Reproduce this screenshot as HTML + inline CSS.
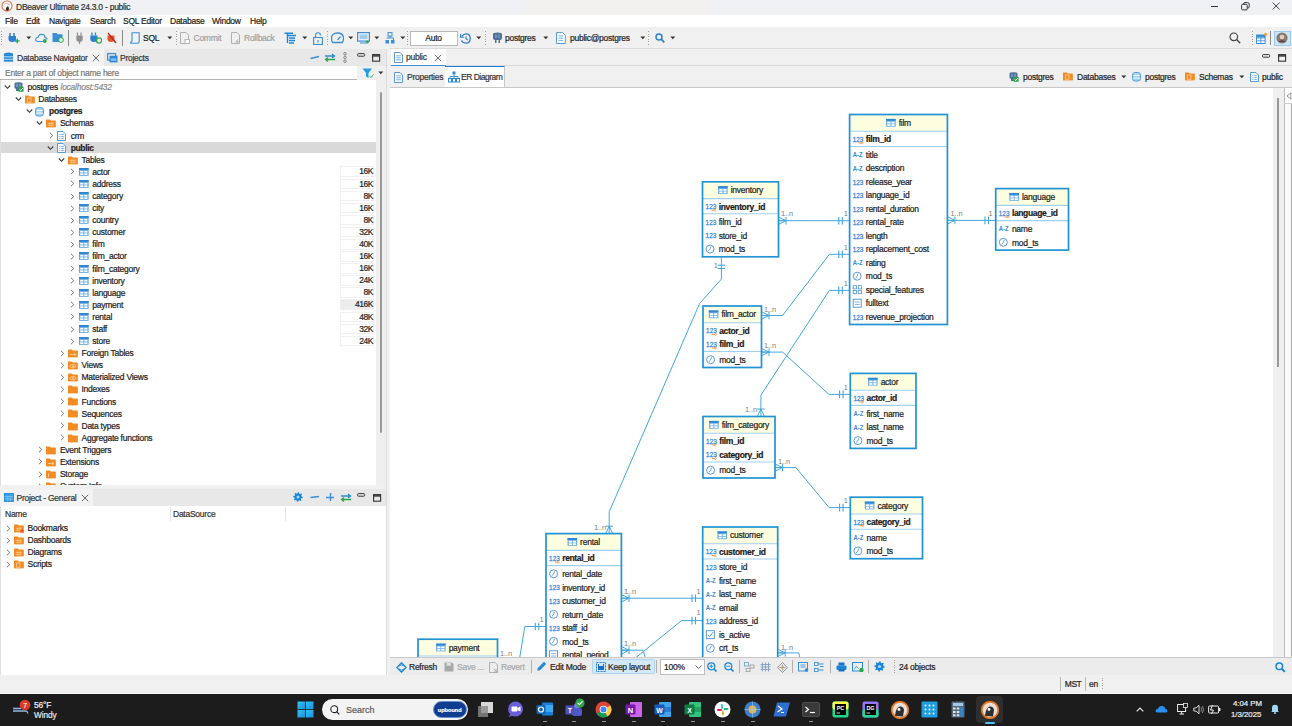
<!DOCTYPE html><html><head><meta charset="utf-8"><style>
html,body{margin:0;padding:0;}body{width:1292px;height:726px;overflow:hidden;position:relative;background:#f0f0f0;font-family:"Liberation Sans",sans-serif;}
.t{position:absolute;white-space:nowrap;font-family:"Liberation Sans",sans-serif;-webkit-text-stroke:0.2px currentColor;}
</style></head><body>
<div style="position:absolute;left:0px;top:0px;width:1292px;height:14.5px;background:#eff1f4;"></div>
<svg style="position:absolute;left:0.6px;top:0.4px;" width="12" height="12" viewBox="0 0 12 12"><circle cx="6" cy="6" r="5" fill="#fbfbfb" stroke="#e8703a" stroke-width="1.1"/><path d="M4.5 10.5 Q5 7 6.5 6.3 Q8.3 6.8 8 9 L7.3 10.8 Z" fill="#2b2b2b"/><path d="M3.5 4 Q6 3 8.5 4.5" fill="none" stroke="#999" stroke-width="0.6"/></svg>
<div class="t" style="left:16px;top:0.10px;line-height:14px;font-size:8.5px;color:#2e2e2e;letter-spacing:-0.25px;">DBeaver Ultimate 24.3.0 - public</div>
<div style="position:absolute;left:1211px;top:5.8px;width:7px;height:1px;background:#333;"></div>
<svg style="position:absolute;left:1240.5px;top:2px;" width="9" height="9" viewBox="0 0 9 9"><rect x="0.6" y="2.3" width="5.6" height="5.6" rx="1" fill="none" stroke="#333" stroke-width="1"/><path d="M2.4 2.2 Q2.6 0.6 4 0.6 H6.6 Q8.2 0.6 8.2 2.2 V4.8 Q8.2 6.2 6.4 6.2" fill="none" stroke="#333" stroke-width="1"/></svg>
<svg style="position:absolute;left:1271.5px;top:2.2px;" width="8.5" height="8" viewBox="0 0 8.5 8"><path d="M0.6 0.6 L7.6 7.4 M7.6 0.6 L0.6 7.4" stroke="#333" stroke-width="0.9"/></svg>
<div style="position:absolute;left:525px;top:0px;width:185px;height:14.5px;background:#f2f1f0;"></div>
<div style="position:absolute;left:0px;top:14.5px;width:1292px;height:12.5px;background:#ffffff;"></div>
<div class="t" style="left:5px;top:14.50px;line-height:13px;font-size:8.5px;color:#1a1a1a;letter-spacing:-0.25px;">File</div>
<div class="t" style="left:26px;top:14.50px;line-height:13px;font-size:8.5px;color:#1a1a1a;letter-spacing:-0.25px;">Edit</div>
<div class="t" style="left:49px;top:14.50px;line-height:13px;font-size:8.5px;color:#1a1a1a;letter-spacing:-0.25px;">Navigate</div>
<div class="t" style="left:90px;top:14.50px;line-height:13px;font-size:8.5px;color:#1a1a1a;letter-spacing:-0.25px;">Search</div>
<div class="t" style="left:123px;top:14.50px;line-height:13px;font-size:8.5px;color:#1a1a1a;letter-spacing:-0.25px;">SQL Editor</div>
<div class="t" style="left:170px;top:14.50px;line-height:13px;font-size:8.5px;color:#1a1a1a;letter-spacing:-0.25px;">Database</div>
<div class="t" style="left:212px;top:14.50px;line-height:13px;font-size:8.5px;color:#1a1a1a;letter-spacing:-0.25px;">Window</div>
<div class="t" style="left:250px;top:14.50px;line-height:13px;font-size:8.5px;color:#1a1a1a;letter-spacing:-0.25px;">Help</div>
<div style="position:absolute;left:0px;top:27px;width:1292px;height:21px;background:#f0f0f0;"></div>
<div style="position:absolute;left:1px;top:31px;width:1px;height:14px;background:repeating-linear-gradient(#a8a098 0 1px, transparent 1px 2.5px);"></div>
<svg style="position:absolute;left:8px;top:32px;" width="12" height="12" viewBox="0 0 12 12"><path d="M2 1 v3 M6 1 v3" stroke="#2f7fd0" stroke-width="1.5"/><path d="M0.5 4 H8 V7 Q8 10 4.2 10 Q0.5 10 0.5 7 Z" fill="#2f7fd0"/><path d="M7 9 h4.5 M9.2 6.8 v4.5" stroke="#2aa84a" stroke-width="1.4"/></svg>
<svg style="position:absolute;left:26px;top:36px;" width="6" height="4" viewBox="0 0 6 4"><path d="M0.3 0.5 H5.3 L2.8 3.3 Z" fill="#333"/></svg>
<svg style="position:absolute;left:35px;top:33px;" width="13" height="10" viewBox="0 0 13 10"><path d="M8 8.5 H3 Q0.6 8.5 0.7 6.3 Q0.9 4.2 3.1 4.3 Q3.8 1.2 6.8 1.3 Q9.8 1.5 10.1 4.6 Q12 4.9 12.2 6.5" fill="none" stroke="#3a8fd6" stroke-width="1.1"/><circle cx="9.8" cy="8" r="1.9" fill="#2aa84a"/></svg>
<svg style="position:absolute;left:52px;top:32px;" width="12" height="11" viewBox="0 0 12 11"><path d="M0.5 1 H4.5 L5.5 2.3 H10.5 V10 H0.5 Z" fill="#3a8fd6"/><circle cx="9" cy="8" r="2.4" fill="#e8f5e8" stroke="#2aa84a" stroke-width="1"/></svg>
<div style="position:absolute;left:67.5px;top:30px;width:1px;height:16px;background:#8a8a8a;"></div>
<svg style="position:absolute;left:76px;top:32px;" width="7" height="12" viewBox="0 0 7 12"><path d="M1.5 0.5 v3 M5 0.5 v3" stroke="#8f8f8f" stroke-width="1.2"/><path d="M0.3 3.5 H6.7 V7 Q6.7 10 3.5 10 Q0.3 10 0.3 7 Z" fill="#8f8f8f"/><path d="M3.5 10 v2" stroke="#8f8f8f" stroke-width="1.2"/></svg>
<svg style="position:absolute;left:90px;top:32px;" width="12" height="12" viewBox="0 0 12 12"><path d="M2 0.5 v3 M5.5 0.5 v3" stroke="#2f7fd0" stroke-width="1.3"/><path d="M0.3 3.5 H7.5 V7 Q7.5 10 3.9 10 Q0.3 10 0.3 7 Z" fill="#2f7fd0"/><circle cx="9" cy="8.5" r="2.6" fill="none" stroke="#2aa84a" stroke-width="1.2"/></svg>
<svg style="position:absolute;left:107px;top:32px;" width="10" height="12" viewBox="0 0 10 12"><path d="M0.5 3.5 H7.5 V7 Q7.5 10 4 10 Q0.5 10 0.5 7 Z" fill="#e0582a"/><path d="M1 1 L9 11" stroke="#c02020" stroke-width="1.3"/></svg>
<div style="position:absolute;left:121.5px;top:30px;width:1px;height:16px;background:#8a8a8a;"></div>
<svg style="position:absolute;left:130px;top:32px;" width="10" height="12" viewBox="0 0 10 12"><path d="M2 0.8 H9.2 V9.5 Q9.2 11.2 7.5 11.2 H0.8 V10 Q2 10 2 8.5 Z" fill="none" stroke="#3a8fd6" stroke-width="1.1"/></svg>
<div class="t" style="left:143px;top:31.00px;line-height:14px;font-size:8.5px;color:#222;letter-spacing:-0.25px;">SQL</div>
<svg style="position:absolute;left:167px;top:36px;" width="6" height="4" viewBox="0 0 6 4"><path d="M0.3 0.5 H5.3 L2.8 3.3 Z" fill="#333"/></svg>
<div style="position:absolute;left:176px;top:31px;width:1px;height:14px;background:repeating-linear-gradient(#a8a098 0 1px, transparent 1px 2.5px);"></div>
<svg style="position:absolute;left:180px;top:32px;" width="10" height="12" viewBox="0 0 10 12"><path d="M0.5 0.5 H6 L8.5 3 V11.5 H0.5 Z" fill="none" stroke="#b0b0b0" stroke-width="1"/><rect x="5" y="7.5" width="4.5" height="4" fill="#fff" stroke="#b0b0b0" stroke-width="0.9"/></svg>
<div class="t" style="left:193.5px;top:31.00px;line-height:14px;font-size:8.5px;color:#a0a0a0;letter-spacing:-0.25px;">Commit</div>
<svg style="position:absolute;left:231px;top:32px;" width="10" height="12" viewBox="0 0 10 12"><path d="M0.5 0.5 H6 L8.5 3 V11.5 H0.5 Z" fill="none" stroke="#b0b0b0" stroke-width="1"/><path d="M5 9.5 h4 M7 7.5 l-2 2 l2 2" fill="none" stroke="#b0b0b0" stroke-width="0.9"/></svg>
<div class="t" style="left:244px;top:31.00px;line-height:14px;font-size:8.5px;color:#a0a0a0;letter-spacing:-0.25px;">Rollback</div>
<svg style="position:absolute;left:284px;top:32px;" width="13" height="12" viewBox="0 0 13 12"><path d="M0.5 1.2 H9 M3.5 1.2 V11 M4 3.5 H12 M5 6 H11 M5 8.5 H11 M5 11 H10" stroke="#1a86d8" stroke-width="1.4"/></svg>
<svg style="position:absolute;left:302px;top:36px;" width="6" height="4" viewBox="0 0 6 4"><path d="M0.3 0.5 H5.3 L2.8 3.3 Z" fill="#333"/></svg>
<svg style="position:absolute;left:313px;top:31.5px;" width="10" height="13" viewBox="0 0 10 13"><path d="M2.5 5.5 V3.5 Q2.5 0.8 5 0.8 Q7.5 0.8 7.5 3.5" fill="none" stroke="#3a8fd6" stroke-width="1.1"/><rect x="0.6" y="5.5" width="8.8" height="7" fill="none" stroke="#3a8fd6" stroke-width="1.1"/><path d="M5 8 v2.5" stroke="#3a8fd6" stroke-width="1.1"/></svg>
<div style="position:absolute;left:327px;top:31px;width:1px;height:14px;background:repeating-linear-gradient(#a8a098 0 1px, transparent 1px 2.5px);"></div>
<svg style="position:absolute;left:331px;top:32px;" width="13" height="12" viewBox="0 0 13 12"><path d="M1.8 10.5 Q0.5 9 0.5 6.5 Q0.5 1 6.5 1 Q12.5 1 12.5 6.5 Q12.5 9 11.2 10.5 Z" fill="none" stroke="#3a8fd6" stroke-width="1.3"/><path d="M6.5 8 L9.5 4.5" stroke="#3a8fd6" stroke-width="1.2"/></svg>
<svg style="position:absolute;left:348px;top:36px;" width="6" height="4" viewBox="0 0 6 4"><path d="M0.3 0.5 H5.3 L2.8 3.3 Z" fill="#333"/></svg>
<svg style="position:absolute;left:357px;top:32px;" width="13" height="12" viewBox="0 0 13 12"><rect x="0.6" y="0.6" width="11.8" height="8.5" fill="none" stroke="#3a8fd6" stroke-width="1.2"/><rect x="2.5" y="2.5" width="8" height="4.5" fill="#9ccbee"/><path d="M3 11 H10" stroke="#3a8fd6" stroke-width="1"/><circle cx="10.5" cy="10" r="1.4" fill="#2aa84a"/></svg>
<svg style="position:absolute;left:374px;top:36px;" width="6" height="4" viewBox="0 0 6 4"><path d="M0.3 0.5 H5.3 L2.8 3.3 Z" fill="#333"/></svg>
<svg style="position:absolute;left:385px;top:32px;" width="10" height="12" viewBox="0 0 10 12"><rect x="3" y="0.6" width="4" height="3.5" fill="none" stroke="#3a8fd6" stroke-width="1"/><path d="M5 4 V6 M1.5 6 H8.5 V8" fill="none" stroke="#3a8fd6" stroke-width="1"/><rect x="0.5" y="8" width="3.5" height="3.5" fill="#3a8fd6"/><rect x="6" y="8" width="3.5" height="3.5" fill="#3a8fd6"/></svg>
<svg style="position:absolute;left:400px;top:36px;" width="6" height="4" viewBox="0 0 6 4"><path d="M0.3 0.5 H5.3 L2.8 3.3 Z" fill="#333"/></svg>
<div style="position:absolute;left:407px;top:31px;width:1px;height:14px;background:repeating-linear-gradient(#a8a098 0 1px, transparent 1px 2.5px);"></div>
<div style="position:absolute;left:409.5px;top:31px;width:48px;height:14.5px;background:#fff;border:1px solid #b9b9b9;box-sizing:border-box;"></div>
<div class="t" style="left:409.5px;top:31.00px;line-height:14px;font-size:8.5px;color:#222;letter-spacing:-0.25px;width:48px;text-align:center;">Auto</div>
<svg style="position:absolute;left:460px;top:32.5px;" width="11" height="11" viewBox="0 0 11 11"><path d="M2 3.2 Q3.8 0.8 6 0.8 Q10.2 0.8 10.2 5.5 Q10.2 10.2 6 10.2 Q2.8 10.2 1.5 7.5" fill="none" stroke="#2f7fd0" stroke-width="1.3"/><path d="M0.5 1 V4.2 H3.7" fill="none" stroke="#2f7fd0" stroke-width="1.2"/><path d="M6 3.3 V5.8 L7.8 7" fill="none" stroke="#2f7fd0" stroke-width="1.1"/></svg>
<svg style="position:absolute;left:476px;top:36px;" width="6" height="4" viewBox="0 0 6 4"><path d="M0.3 0.5 H5.3 L2.8 3.3 Z" fill="#333"/></svg>
<div style="position:absolute;left:485px;top:31px;width:1px;height:14px;background:repeating-linear-gradient(#a8a098 0 1px, transparent 1px 2.5px);"></div>
<svg style="position:absolute;left:492px;top:32px;" width="11" height="12" viewBox="0 0 11 12"><path d="M1 2 Q1 0.5 5.5 0.5 Q10 0.5 10 2.5 V6 Q10 8 8 8 V11 H6.5 V8 H4.5 V11 H3 V8 Q1 8 1 6 Z" fill="#4d6f99"/><path d="M4 2.5 V6 M7 2.5 V6" stroke="#a9c2dc" stroke-width="0.8"/></svg>
<div class="t" style="left:505px;top:31.00px;line-height:14px;font-size:8.5px;color:#222;letter-spacing:-0.25px;">postgres</div>
<svg style="position:absolute;left:543px;top:36px;" width="6" height="4" viewBox="0 0 6 4"><path d="M0.3 0.5 H5.3 L2.8 3.3 Z" fill="#333"/></svg>
<svg style="position:absolute;left:556px;top:32px;" width="10" height="12" viewBox="0 0 10 12"><path d="M0.5 0.5 H6.5 L9.3 3.2 V11.5 H0.5 Z" fill="#fff" stroke="#5b9bd5" stroke-width="1"/><path d="M2.5 4 H7 M2.5 6.2 H7 M2.5 8.4 H7" stroke="#5b9bd5" stroke-width="0.8"/></svg>
<div class="t" style="left:570px;top:31.00px;line-height:14px;font-size:8.5px;color:#222;letter-spacing:-0.25px;">public@postgres</div>
<svg style="position:absolute;left:640px;top:36px;" width="6" height="4" viewBox="0 0 6 4"><path d="M0.3 0.5 H5.3 L2.8 3.3 Z" fill="#333"/></svg>
<div style="position:absolute;left:648px;top:31px;width:1px;height:14px;background:repeating-linear-gradient(#a8a098 0 1px, transparent 1px 2.5px);"></div>
<svg style="position:absolute;left:655px;top:33px;" width="10" height="10" viewBox="0 0 10 10"><circle cx="4" cy="4" r="3" fill="none" stroke="#2f7fd0" stroke-width="1.5"/><path d="M6.2 6.2 L9.3 9.3" stroke="#2f7fd0" stroke-width="1.8"/></svg>
<svg style="position:absolute;left:670px;top:36px;" width="6" height="4" viewBox="0 0 6 4"><path d="M0.3 0.5 H5.3 L2.8 3.3 Z" fill="#333"/></svg>
<svg style="position:absolute;left:1229px;top:32px;" width="12" height="12" viewBox="0 0 12 12"><circle cx="4.8" cy="4.8" r="3.8" fill="none" stroke="#444" stroke-width="1.2"/><path d="M7.6 7.6 L11.2 11.2" stroke="#444" stroke-width="1.4"/></svg>
<div style="position:absolute;left:1252px;top:31px;width:1px;height:14px;background:repeating-linear-gradient(#a8a098 0 1px, transparent 1px 2.5px);"></div>
<svg style="position:absolute;left:1256px;top:32px;" width="12" height="12" viewBox="0 0 12 12"><rect x="0.6" y="3" width="8.5" height="8.5" fill="#fff" stroke="#3a8fd6" stroke-width="1"/><path d="M0.6 6 H9 M0.6 8.8 H9 M4.8 3 V11.5" stroke="#3a8fd6" stroke-width="0.8"/><rect x="0.6" y="3" width="8.5" height="2.5" fill="#3a8fd6"/><path d="M9.5 0.5 L11.5 2.5 L9.5 4.5 L7.5 2.5 Z" fill="#f39a2b"/></svg>
<div style="position:absolute;left:1270px;top:31px;width:1px;height:14px;background:#8a8a8a;"></div>
<div style="position:absolute;left:1273.5px;top:30.5px;width:17px;height:15px;background:#cce5f8;border:1px solid #99c9ef;box-sizing:border-box;"></div>
<svg style="position:absolute;left:1276px;top:32px;" width="12" height="12" viewBox="0 0 12 12"><circle cx="6" cy="6" r="5.6" fill="#8a7a70"/><circle cx="6" cy="5" r="2.3" fill="#e0d0c0"/><path d="M2 10 Q6 6.5 10 10" fill="#504540"/></svg>
<div style="position:absolute;left:0px;top:48.5px;width:386px;height:17.5px;background:#e8e8e8;"></div>
<div style="position:absolute;left:0px;top:48.5px;width:103.5px;height:17.5px;background:#f3f3f3;"></div>
<div class="t" style="left:17px;top:51.50px;line-height:12px;font-size:8.5px;color:#333;letter-spacing:-0.25px;">Database Navigator</div>
<svg style="position:absolute;left:3px;top:52px;" width="11" height="11" viewBox="0 0 11 11"><ellipse cx="5.5" cy="2.2" rx="4.6" ry="1.8" fill="#2a8ad8"/><rect x="0.9" y="2.2" width="9.2" height="7.5" fill="#2a8ad8"/><path d="M0.9 4.8 H10 M0.9 7.3 H10" stroke="#fff" stroke-width="0.7"/></svg>
<svg style="position:absolute;left:91.5px;top:53.5px;" width="8" height="8" viewBox="0 0 8 8"><path d="M0.8 0.8 L7.2 7.2 M7.2 0.8 L0.8 7.2" stroke="#555" stroke-width="0.9"/></svg>
<svg style="position:absolute;left:106.5px;top:52.5px;" width="11" height="10" viewBox="0 0 11 10"><rect x="0.6" y="0.6" width="8" height="6.5" fill="none" stroke="#2a8ad8" stroke-width="1.1"/><rect x="2.5" y="2.7" width="8" height="6.7" fill="#2a8ad8"/><rect x="3.8" y="5.3" width="5.5" height="2.6" fill="#7fbfee"/></svg>
<svg style="position:absolute;left:310px;top:55px;" width="10" height="5" viewBox="0 0 10 5"><path d="M0.5 3.5 L9 1.5" stroke="#3a8fd6" stroke-width="1.6"/></svg>
<svg style="position:absolute;left:324px;top:53px;" width="12" height="9" viewBox="0 0 12 9"><path d="M1 3 H10 M8 1 L10.5 3 L8 5" fill="none" stroke="#2a8ad8" stroke-width="1.3"/><path d="M11 6.5 H2 M4 4.5 L1.5 6.5 L4 8.5" fill="none" stroke="#2aa84a" stroke-width="1.3"/></svg>
<svg style="position:absolute;left:343px;top:52px;" width="4" height="11" viewBox="0 0 4 11"><circle cx="2" cy="1.8" r="1.3" fill="none" stroke="#666" stroke-width="0.7"/><circle cx="2" cy="5.5" r="1.3" fill="none" stroke="#666" stroke-width="0.7"/><circle cx="2" cy="9.2" r="1.3" fill="none" stroke="#666" stroke-width="0.7"/></svg>
<svg style="position:absolute;left:357px;top:53.2px;" width="9" height="5" viewBox="0 0 9 5"><rect x="0.6" y="0.6" width="7" height="2.6" rx="0.8" fill="none" stroke="#333" stroke-width="1"/></svg>
<svg style="position:absolute;left:372.0px;top:53.5px;" width="9" height="9" viewBox="0 0 9 9"><rect x="0.6" y="0.6" width="7" height="6.6" fill="none" stroke="#333" stroke-width="1.1"/><path d="M0.6 1.9 H7.6" stroke="#333" stroke-width="1.5"/></svg>
<div class="t" style="left:120px;top:51.50px;line-height:12px;font-size:8.5px;color:#333;letter-spacing:-0.25px;">Projects</div>
<div style="position:absolute;left:0px;top:66px;width:386px;height:14px;background:#f0f0f0;"></div>
<div style="position:absolute;left:0px;top:66px;width:357px;height:13.5px;background:#fff;border-bottom:1px solid #b4b4b4;box-sizing:border-box;"></div>
<div class="t" style="left:5px;top:67.00px;line-height:12px;font-size:8.5px;color:#777;letter-spacing:-0.25px;">Enter a part of object name here</div>
<svg style="position:absolute;left:362px;top:68px;" width="12" height="11" viewBox="0 0 12 11"><path d="M0.5 0.5 H10 L6.5 5 V10 L4 8.5 V5 Z" fill="#1ba0e0"/><path d="M7.5 8 L9 9.5 L11.5 6.5" fill="none" stroke="#2aa84a" stroke-width="0.9"/></svg>
<svg style="position:absolute;left:377.5px;top:71px;" width="6" height="4" viewBox="0 0 6 4"><path d="M0.3 0.5 H5.3 L2.8 3.3 Z" fill="#333"/></svg>
<div style="position:absolute;left:0px;top:80px;width:376px;height:405px;background:#fff;"></div>
<div style="position:absolute;left:376px;top:80px;width:10px;height:405px;background:#efefef;"></div>
<div style="position:absolute;left:380px;top:92px;width:2px;height:340.5px;background:#9a9a9a;border-radius:1px;"></div>
<div style="position:absolute;left:0px;top:141.85px;width:376px;height:11.6px;background:#d9d9d9;"></div>
<div style="position:absolute;left:0;top:80px;width:376px;height:405px;overflow:hidden;">
<svg style="position:absolute;left:4.0px;top:4.200000000000003px;" width="7" height="6" viewBox="0 0 7 6"><path d="M0.8 1.5 L3.5 4.3 L6.2 1.5" fill="none" stroke="#3a3a3a" stroke-width="1.1"/></svg>
<svg style="position:absolute;left:13.8px;top:2.200000000000003px;" width="11" height="11" viewBox="0 0 11 11"><path d="M0.5 1.5 Q0.5 0.3 4.5 0.3 Q8.5 0.3 8.5 1.5 V5.5 Q8.5 6.8 7 6.8 V9 H2 V6.8 Q0.5 6.8 0.5 5.5 Z" fill="#4d709b"/><path d="M3 1.8 V5 M6 1.8 V5" stroke="#b8cde2" stroke-width="0.8"/><rect x="4.6" y="4.8" width="5" height="5" fill="#27a545"/><path d="M5.5 7.3 L6.8 8.5 L8.8 6" stroke="#fff" stroke-width="0.9" fill="none"/></svg>
<div class="t" style="left:27.5px;top:1.20px;line-height:12px;font-size:8.5px;color:#1b1b1b;letter-spacing:-0.25px;">postgres</div>
<div class="t" style="left:60.5px;top:1.20px;line-height:12px;font-size:8.5px;color:#8a8a8a;letter-spacing:-0.25px;font-style:italic;">localhost:5432</div>
<svg style="position:absolute;left:14.8px;top:16.290000000000006px;" width="7" height="6" viewBox="0 0 7 6"><path d="M0.8 1.5 L3.5 4.3 L6.2 1.5" fill="none" stroke="#3a3a3a" stroke-width="1.1"/></svg>
<svg style="position:absolute;left:24.6px;top:15.090000000000007px;" width="10" height="9" viewBox="0 0 10 9"><path d="M0 0.4 H3.8 L4.8 1.4 H9.6 V8.2 H0 Z" fill="#f28c22"/><rect x="0" y="2" width="9.6" height="6.2" fill="#f28c22"/><rect x="2.3" y="3" width="3.6" height="4.2" fill="none" stroke="#ffd9b0" stroke-width="0.7"/></svg>
<div class="t" style="left:38.3px;top:13.29px;line-height:12px;font-size:8.5px;color:#1b1b1b;letter-spacing:-0.25px;">Databases</div>
<svg style="position:absolute;left:25.6px;top:28.379999999999995px;" width="7" height="6" viewBox="0 0 7 6"><path d="M0.8 1.5 L3.5 4.3 L6.2 1.5" fill="none" stroke="#3a3a3a" stroke-width="1.1"/></svg>
<svg style="position:absolute;left:35.400000000000006px;top:26.679999999999996px;" width="9" height="10" viewBox="0 0 9 10"><rect x="0.5" y="0.5" width="8" height="8.6" rx="2.6" fill="#a6d2f2" stroke="#5aa0dc" stroke-width="1"/><path d="M1.5 3.4 H7.5 M1.5 6.1 H7.5" stroke="#fff" stroke-width="0.9"/></svg>
<div class="t" style="left:49.1px;top:25.38px;line-height:12px;font-size:8.5px;color:#1b1b1b;letter-spacing:-0.35px;font-weight:bold;">postgres</div>
<svg style="position:absolute;left:36.400000000000006px;top:40.47px;" width="7" height="6" viewBox="0 0 7 6"><path d="M0.8 1.5 L3.5 4.3 L6.2 1.5" fill="none" stroke="#3a3a3a" stroke-width="1.1"/></svg>
<svg style="position:absolute;left:46.2px;top:39.269999999999996px;" width="10" height="9" viewBox="0 0 10 9"><path d="M0 0.4 H3.8 L4.8 1.4 H9.6 V8.2 H0 Z" fill="#f28c22"/><rect x="0" y="2" width="9.6" height="6.2" fill="#f28c22"/><path d="M1.8 4.3 H8 M1.8 6.3 H8 M3.8 3.3 V7.5 M6 3.3 V7.5" stroke="#ffd9b0" stroke-width="0.6"/></svg>
<div class="t" style="left:59.900000000000006px;top:37.47px;line-height:12px;font-size:8.5px;color:#1b1b1b;letter-spacing:-0.25px;">Schemas</div>
<svg style="position:absolute;left:48.7px;top:52.06px;" width="5" height="7" viewBox="0 0 5 7"><path d="M0.9 0.7 L3.8 3.5 L0.9 6.3" fill="none" stroke="#7a7a7a" stroke-width="1"/></svg>
<svg style="position:absolute;left:57.0px;top:50.56px;" width="9" height="10" viewBox="0 0 9 10"><path d="M0.5 0.5 H6 L8.5 3 V9.5 H0.5 Z" fill="#f4f9fe" stroke="#5b9bd5" stroke-width="1"/><path d="M2.3 3.5 H3.3 M4.3 3.5 H6.8 M2.3 5.5 H3.3 M4.3 5.5 H6.8 M2.3 7.5 H3.3 M4.3 7.5 H6.8" stroke="#5b9bd5" stroke-width="0.8"/></svg>
<div class="t" style="left:70.7px;top:49.56px;line-height:12px;font-size:8.5px;color:#1b1b1b;letter-spacing:-0.25px;">crm</div>
<svg style="position:absolute;left:47.2px;top:64.65px;" width="7" height="6" viewBox="0 0 7 6"><path d="M0.8 1.5 L3.5 4.3 L6.2 1.5" fill="none" stroke="#3a3a3a" stroke-width="1.1"/></svg>
<svg style="position:absolute;left:57.0px;top:62.650000000000006px;" width="9" height="10" viewBox="0 0 9 10"><path d="M0.5 0.5 H6 L8.5 3 V9.5 H0.5 Z" fill="#f4f9fe" stroke="#5b9bd5" stroke-width="1"/><path d="M2.3 3.5 H3.3 M4.3 3.5 H6.8 M2.3 5.5 H3.3 M4.3 5.5 H6.8 M2.3 7.5 H3.3 M4.3 7.5 H6.8" stroke="#5b9bd5" stroke-width="0.8"/></svg>
<div class="t" style="left:70.7px;top:61.65px;line-height:12px;font-size:8.5px;color:#1b1b1b;letter-spacing:-0.35px;font-weight:bold;">public</div>
<svg style="position:absolute;left:58.0px;top:76.74000000000001px;" width="7" height="6" viewBox="0 0 7 6"><path d="M0.8 1.5 L3.5 4.3 L6.2 1.5" fill="none" stroke="#3a3a3a" stroke-width="1.1"/></svg>
<svg style="position:absolute;left:67.8px;top:75.54px;" width="10" height="9" viewBox="0 0 10 9"><path d="M0 0.4 H3.8 L4.8 1.4 H9.6 V8.2 H0 Z" fill="#f28c22"/><rect x="0" y="2" width="9.6" height="6.2" fill="#f28c22"/><path d="M1.8 4.3 H8 M1.8 6.3 H8 M3.8 3.3 V7.5 M6 3.3 V7.5" stroke="#ffd9b0" stroke-width="0.6"/></svg>
<div class="t" style="left:81.5px;top:73.74px;line-height:12px;font-size:8.5px;color:#1b1b1b;letter-spacing:-0.25px;">Tables</div>
<svg style="position:absolute;left:70.30000000000001px;top:88.32999999999998px;" width="5" height="7" viewBox="0 0 5 7"><path d="M0.9 0.7 L3.8 3.5 L0.9 6.3" fill="none" stroke="#7a7a7a" stroke-width="1"/></svg>
<svg style="position:absolute;left:78.60000000000001px;top:87.82999999999998px;" width="10" height="8" viewBox="0 0 10 8"><rect x="0" y="0" width="9.6" height="7.8" fill="#5aa5e2"/><rect x="0" y="0" width="9.6" height="1.9" fill="#2f86d6"/><rect x="1.2" y="2.8" width="3.2" height="1.8" fill="#fff"/><rect x="5.3" y="2.8" width="3.2" height="1.8" fill="#fff"/><rect x="1.2" y="5.3" width="3.2" height="1.7" fill="#fff"/><rect x="5.3" y="5.3" width="3.2" height="1.7" fill="#fff"/></svg>
<div class="t" style="left:92.30000000000001px;top:85.83px;line-height:12px;font-size:8.5px;color:#1b1b1b;letter-spacing:-0.25px;">actor</div>
<svg style="position:absolute;left:70.30000000000001px;top:100.42000000000002px;" width="5" height="7" viewBox="0 0 5 7"><path d="M0.9 0.7 L3.8 3.5 L0.9 6.3" fill="none" stroke="#7a7a7a" stroke-width="1"/></svg>
<svg style="position:absolute;left:78.60000000000001px;top:99.92000000000002px;" width="10" height="8" viewBox="0 0 10 8"><rect x="0" y="0" width="9.6" height="7.8" fill="#5aa5e2"/><rect x="0" y="0" width="9.6" height="1.9" fill="#2f86d6"/><rect x="1.2" y="2.8" width="3.2" height="1.8" fill="#fff"/><rect x="5.3" y="2.8" width="3.2" height="1.8" fill="#fff"/><rect x="1.2" y="5.3" width="3.2" height="1.7" fill="#fff"/><rect x="5.3" y="5.3" width="3.2" height="1.7" fill="#fff"/></svg>
<div class="t" style="left:92.30000000000001px;top:97.92px;line-height:12px;font-size:8.5px;color:#1b1b1b;letter-spacing:-0.25px;">address</div>
<svg style="position:absolute;left:70.30000000000001px;top:112.50999999999999px;" width="5" height="7" viewBox="0 0 5 7"><path d="M0.9 0.7 L3.8 3.5 L0.9 6.3" fill="none" stroke="#7a7a7a" stroke-width="1"/></svg>
<svg style="position:absolute;left:78.60000000000001px;top:112.00999999999999px;" width="10" height="8" viewBox="0 0 10 8"><rect x="0" y="0" width="9.6" height="7.8" fill="#5aa5e2"/><rect x="0" y="0" width="9.6" height="1.9" fill="#2f86d6"/><rect x="1.2" y="2.8" width="3.2" height="1.8" fill="#fff"/><rect x="5.3" y="2.8" width="3.2" height="1.8" fill="#fff"/><rect x="1.2" y="5.3" width="3.2" height="1.7" fill="#fff"/><rect x="5.3" y="5.3" width="3.2" height="1.7" fill="#fff"/></svg>
<div class="t" style="left:92.30000000000001px;top:110.01px;line-height:12px;font-size:8.5px;color:#1b1b1b;letter-spacing:-0.25px;">category</div>
<svg style="position:absolute;left:70.30000000000001px;top:124.60000000000002px;" width="5" height="7" viewBox="0 0 5 7"><path d="M0.9 0.7 L3.8 3.5 L0.9 6.3" fill="none" stroke="#7a7a7a" stroke-width="1"/></svg>
<svg style="position:absolute;left:78.60000000000001px;top:124.10000000000002px;" width="10" height="8" viewBox="0 0 10 8"><rect x="0" y="0" width="9.6" height="7.8" fill="#5aa5e2"/><rect x="0" y="0" width="9.6" height="1.9" fill="#2f86d6"/><rect x="1.2" y="2.8" width="3.2" height="1.8" fill="#fff"/><rect x="5.3" y="2.8" width="3.2" height="1.8" fill="#fff"/><rect x="1.2" y="5.3" width="3.2" height="1.7" fill="#fff"/><rect x="5.3" y="5.3" width="3.2" height="1.7" fill="#fff"/></svg>
<div class="t" style="left:92.30000000000001px;top:122.10px;line-height:12px;font-size:8.5px;color:#1b1b1b;letter-spacing:-0.25px;">city</div>
<svg style="position:absolute;left:70.30000000000001px;top:136.69px;" width="5" height="7" viewBox="0 0 5 7"><path d="M0.9 0.7 L3.8 3.5 L0.9 6.3" fill="none" stroke="#7a7a7a" stroke-width="1"/></svg>
<svg style="position:absolute;left:78.60000000000001px;top:136.19px;" width="10" height="8" viewBox="0 0 10 8"><rect x="0" y="0" width="9.6" height="7.8" fill="#5aa5e2"/><rect x="0" y="0" width="9.6" height="1.9" fill="#2f86d6"/><rect x="1.2" y="2.8" width="3.2" height="1.8" fill="#fff"/><rect x="5.3" y="2.8" width="3.2" height="1.8" fill="#fff"/><rect x="1.2" y="5.3" width="3.2" height="1.7" fill="#fff"/><rect x="5.3" y="5.3" width="3.2" height="1.7" fill="#fff"/></svg>
<div class="t" style="left:92.30000000000001px;top:134.19px;line-height:12px;font-size:8.5px;color:#1b1b1b;letter-spacing:-0.25px;">country</div>
<svg style="position:absolute;left:70.30000000000001px;top:148.77999999999997px;" width="5" height="7" viewBox="0 0 5 7"><path d="M0.9 0.7 L3.8 3.5 L0.9 6.3" fill="none" stroke="#7a7a7a" stroke-width="1"/></svg>
<svg style="position:absolute;left:78.60000000000001px;top:148.27999999999997px;" width="10" height="8" viewBox="0 0 10 8"><rect x="0" y="0" width="9.6" height="7.8" fill="#5aa5e2"/><rect x="0" y="0" width="9.6" height="1.9" fill="#2f86d6"/><rect x="1.2" y="2.8" width="3.2" height="1.8" fill="#fff"/><rect x="5.3" y="2.8" width="3.2" height="1.8" fill="#fff"/><rect x="1.2" y="5.3" width="3.2" height="1.7" fill="#fff"/><rect x="5.3" y="5.3" width="3.2" height="1.7" fill="#fff"/></svg>
<div class="t" style="left:92.30000000000001px;top:146.28px;line-height:12px;font-size:8.5px;color:#1b1b1b;letter-spacing:-0.25px;">customer</div>
<svg style="position:absolute;left:70.30000000000001px;top:160.87px;" width="5" height="7" viewBox="0 0 5 7"><path d="M0.9 0.7 L3.8 3.5 L0.9 6.3" fill="none" stroke="#7a7a7a" stroke-width="1"/></svg>
<svg style="position:absolute;left:78.60000000000001px;top:160.37px;" width="10" height="8" viewBox="0 0 10 8"><rect x="0" y="0" width="9.6" height="7.8" fill="#5aa5e2"/><rect x="0" y="0" width="9.6" height="1.9" fill="#2f86d6"/><rect x="1.2" y="2.8" width="3.2" height="1.8" fill="#fff"/><rect x="5.3" y="2.8" width="3.2" height="1.8" fill="#fff"/><rect x="1.2" y="5.3" width="3.2" height="1.7" fill="#fff"/><rect x="5.3" y="5.3" width="3.2" height="1.7" fill="#fff"/></svg>
<div class="t" style="left:92.30000000000001px;top:158.37px;line-height:12px;font-size:8.5px;color:#1b1b1b;letter-spacing:-0.25px;">film</div>
<svg style="position:absolute;left:70.30000000000001px;top:172.95999999999998px;" width="5" height="7" viewBox="0 0 5 7"><path d="M0.9 0.7 L3.8 3.5 L0.9 6.3" fill="none" stroke="#7a7a7a" stroke-width="1"/></svg>
<svg style="position:absolute;left:78.60000000000001px;top:172.45999999999998px;" width="10" height="8" viewBox="0 0 10 8"><rect x="0" y="0" width="9.6" height="7.8" fill="#5aa5e2"/><rect x="0" y="0" width="9.6" height="1.9" fill="#2f86d6"/><rect x="1.2" y="2.8" width="3.2" height="1.8" fill="#fff"/><rect x="5.3" y="2.8" width="3.2" height="1.8" fill="#fff"/><rect x="1.2" y="5.3" width="3.2" height="1.7" fill="#fff"/><rect x="5.3" y="5.3" width="3.2" height="1.7" fill="#fff"/></svg>
<div class="t" style="left:92.30000000000001px;top:170.46px;line-height:12px;font-size:8.5px;color:#1b1b1b;letter-spacing:-0.25px;">film_actor</div>
<svg style="position:absolute;left:70.30000000000001px;top:185.05px;" width="5" height="7" viewBox="0 0 5 7"><path d="M0.9 0.7 L3.8 3.5 L0.9 6.3" fill="none" stroke="#7a7a7a" stroke-width="1"/></svg>
<svg style="position:absolute;left:78.60000000000001px;top:184.55px;" width="10" height="8" viewBox="0 0 10 8"><rect x="0" y="0" width="9.6" height="7.8" fill="#5aa5e2"/><rect x="0" y="0" width="9.6" height="1.9" fill="#2f86d6"/><rect x="1.2" y="2.8" width="3.2" height="1.8" fill="#fff"/><rect x="5.3" y="2.8" width="3.2" height="1.8" fill="#fff"/><rect x="1.2" y="5.3" width="3.2" height="1.7" fill="#fff"/><rect x="5.3" y="5.3" width="3.2" height="1.7" fill="#fff"/></svg>
<div class="t" style="left:92.30000000000001px;top:182.55px;line-height:12px;font-size:8.5px;color:#1b1b1b;letter-spacing:-0.25px;">film_category</div>
<svg style="position:absolute;left:70.30000000000001px;top:197.14px;" width="5" height="7" viewBox="0 0 5 7"><path d="M0.9 0.7 L3.8 3.5 L0.9 6.3" fill="none" stroke="#7a7a7a" stroke-width="1"/></svg>
<svg style="position:absolute;left:78.60000000000001px;top:196.64px;" width="10" height="8" viewBox="0 0 10 8"><rect x="0" y="0" width="9.6" height="7.8" fill="#5aa5e2"/><rect x="0" y="0" width="9.6" height="1.9" fill="#2f86d6"/><rect x="1.2" y="2.8" width="3.2" height="1.8" fill="#fff"/><rect x="5.3" y="2.8" width="3.2" height="1.8" fill="#fff"/><rect x="1.2" y="5.3" width="3.2" height="1.7" fill="#fff"/><rect x="5.3" y="5.3" width="3.2" height="1.7" fill="#fff"/></svg>
<div class="t" style="left:92.30000000000001px;top:194.64px;line-height:12px;font-size:8.5px;color:#1b1b1b;letter-spacing:-0.25px;">inventory</div>
<svg style="position:absolute;left:70.30000000000001px;top:209.23000000000002px;" width="5" height="7" viewBox="0 0 5 7"><path d="M0.9 0.7 L3.8 3.5 L0.9 6.3" fill="none" stroke="#7a7a7a" stroke-width="1"/></svg>
<svg style="position:absolute;left:78.60000000000001px;top:208.73000000000002px;" width="10" height="8" viewBox="0 0 10 8"><rect x="0" y="0" width="9.6" height="7.8" fill="#5aa5e2"/><rect x="0" y="0" width="9.6" height="1.9" fill="#2f86d6"/><rect x="1.2" y="2.8" width="3.2" height="1.8" fill="#fff"/><rect x="5.3" y="2.8" width="3.2" height="1.8" fill="#fff"/><rect x="1.2" y="5.3" width="3.2" height="1.7" fill="#fff"/><rect x="5.3" y="5.3" width="3.2" height="1.7" fill="#fff"/></svg>
<div class="t" style="left:92.30000000000001px;top:206.73px;line-height:12px;font-size:8.5px;color:#1b1b1b;letter-spacing:-0.25px;">language</div>
<svg style="position:absolute;left:70.30000000000001px;top:221.32px;" width="5" height="7" viewBox="0 0 5 7"><path d="M0.9 0.7 L3.8 3.5 L0.9 6.3" fill="none" stroke="#7a7a7a" stroke-width="1"/></svg>
<svg style="position:absolute;left:78.60000000000001px;top:220.82px;" width="10" height="8" viewBox="0 0 10 8"><rect x="0" y="0" width="9.6" height="7.8" fill="#5aa5e2"/><rect x="0" y="0" width="9.6" height="1.9" fill="#2f86d6"/><rect x="1.2" y="2.8" width="3.2" height="1.8" fill="#fff"/><rect x="5.3" y="2.8" width="3.2" height="1.8" fill="#fff"/><rect x="1.2" y="5.3" width="3.2" height="1.7" fill="#fff"/><rect x="5.3" y="5.3" width="3.2" height="1.7" fill="#fff"/></svg>
<div class="t" style="left:92.30000000000001px;top:218.82px;line-height:12px;font-size:8.5px;color:#1b1b1b;letter-spacing:-0.25px;">payment</div>
<svg style="position:absolute;left:70.30000000000001px;top:233.41000000000003px;" width="5" height="7" viewBox="0 0 5 7"><path d="M0.9 0.7 L3.8 3.5 L0.9 6.3" fill="none" stroke="#7a7a7a" stroke-width="1"/></svg>
<svg style="position:absolute;left:78.60000000000001px;top:232.91000000000003px;" width="10" height="8" viewBox="0 0 10 8"><rect x="0" y="0" width="9.6" height="7.8" fill="#5aa5e2"/><rect x="0" y="0" width="9.6" height="1.9" fill="#2f86d6"/><rect x="1.2" y="2.8" width="3.2" height="1.8" fill="#fff"/><rect x="5.3" y="2.8" width="3.2" height="1.8" fill="#fff"/><rect x="1.2" y="5.3" width="3.2" height="1.7" fill="#fff"/><rect x="5.3" y="5.3" width="3.2" height="1.7" fill="#fff"/></svg>
<div class="t" style="left:92.30000000000001px;top:230.91px;line-height:12px;font-size:8.5px;color:#1b1b1b;letter-spacing:-0.25px;">rental</div>
<svg style="position:absolute;left:70.30000000000001px;top:245.5px;" width="5" height="7" viewBox="0 0 5 7"><path d="M0.9 0.7 L3.8 3.5 L0.9 6.3" fill="none" stroke="#7a7a7a" stroke-width="1"/></svg>
<svg style="position:absolute;left:78.60000000000001px;top:245.0px;" width="10" height="8" viewBox="0 0 10 8"><rect x="0" y="0" width="9.6" height="7.8" fill="#5aa5e2"/><rect x="0" y="0" width="9.6" height="1.9" fill="#2f86d6"/><rect x="1.2" y="2.8" width="3.2" height="1.8" fill="#fff"/><rect x="5.3" y="2.8" width="3.2" height="1.8" fill="#fff"/><rect x="1.2" y="5.3" width="3.2" height="1.7" fill="#fff"/><rect x="5.3" y="5.3" width="3.2" height="1.7" fill="#fff"/></svg>
<div class="t" style="left:92.30000000000001px;top:243.00px;line-height:12px;font-size:8.5px;color:#1b1b1b;letter-spacing:-0.25px;">staff</div>
<svg style="position:absolute;left:70.30000000000001px;top:257.59px;" width="5" height="7" viewBox="0 0 5 7"><path d="M0.9 0.7 L3.8 3.5 L0.9 6.3" fill="none" stroke="#7a7a7a" stroke-width="1"/></svg>
<svg style="position:absolute;left:78.60000000000001px;top:257.09px;" width="10" height="8" viewBox="0 0 10 8"><rect x="0" y="0" width="9.6" height="7.8" fill="#5aa5e2"/><rect x="0" y="0" width="9.6" height="1.9" fill="#2f86d6"/><rect x="1.2" y="2.8" width="3.2" height="1.8" fill="#fff"/><rect x="5.3" y="2.8" width="3.2" height="1.8" fill="#fff"/><rect x="1.2" y="5.3" width="3.2" height="1.7" fill="#fff"/><rect x="5.3" y="5.3" width="3.2" height="1.7" fill="#fff"/></svg>
<div class="t" style="left:92.30000000000001px;top:255.09px;line-height:12px;font-size:8.5px;color:#1b1b1b;letter-spacing:-0.25px;">store</div>
<svg style="position:absolute;left:59.5px;top:269.68px;" width="5" height="7" viewBox="0 0 5 7"><path d="M0.9 0.7 L3.8 3.5 L0.9 6.3" fill="none" stroke="#7a7a7a" stroke-width="1"/></svg>
<svg style="position:absolute;left:67.8px;top:268.98px;" width="10" height="9" viewBox="0 0 10 9"><path d="M0 0.4 H3.8 L4.8 1.4 H9.6 V8.2 H0 Z" fill="#f28c22"/><rect x="0" y="2" width="9.6" height="6.2" fill="#f28c22"/><path d="M2 5.5 H8 M6 4 L8 5.5 L6 7" fill="none" stroke="#ffe0c0" stroke-width="0.7"/></svg>
<div class="t" style="left:81.5px;top:267.18px;line-height:12px;font-size:8.5px;color:#1b1b1b;letter-spacing:-0.25px;">Foreign Tables</div>
<svg style="position:absolute;left:59.5px;top:281.77px;" width="5" height="7" viewBox="0 0 5 7"><path d="M0.9 0.7 L3.8 3.5 L0.9 6.3" fill="none" stroke="#7a7a7a" stroke-width="1"/></svg>
<svg style="position:absolute;left:67.8px;top:281.07px;" width="10" height="9" viewBox="0 0 10 9"><path d="M0 0.4 H3.8 L4.8 1.4 H9.6 V8.2 H0 Z" fill="#f28c22"/><rect x="0" y="2" width="9.6" height="6.2" fill="#f28c22"/><ellipse cx="5" cy="5.2" rx="3" ry="1.6" fill="none" stroke="#ffe0c0" stroke-width="0.7"/><circle cx="5" cy="5.2" r="0.8" fill="#ffe0c0"/></svg>
<div class="t" style="left:81.5px;top:279.27px;line-height:12px;font-size:8.5px;color:#1b1b1b;letter-spacing:-0.25px;">Views</div>
<svg style="position:absolute;left:59.5px;top:293.85999999999996px;" width="5" height="7" viewBox="0 0 5 7"><path d="M0.9 0.7 L3.8 3.5 L0.9 6.3" fill="none" stroke="#7a7a7a" stroke-width="1"/></svg>
<svg style="position:absolute;left:67.8px;top:293.15999999999997px;" width="10" height="9" viewBox="0 0 10 9"><path d="M0 0.4 H3.8 L4.8 1.4 H9.6 V8.2 H0 Z" fill="#f28c22"/><rect x="0" y="2" width="9.6" height="6.2" fill="#f28c22"/><ellipse cx="5" cy="5.2" rx="3" ry="1.6" fill="none" stroke="#ffe0c0" stroke-width="0.7"/><circle cx="5" cy="5.2" r="0.8" fill="#ffe0c0"/></svg>
<div class="t" style="left:81.5px;top:291.36px;line-height:12px;font-size:8.5px;color:#1b1b1b;letter-spacing:-0.25px;">Materialized Views</div>
<svg style="position:absolute;left:59.5px;top:305.95px;" width="5" height="7" viewBox="0 0 5 7"><path d="M0.9 0.7 L3.8 3.5 L0.9 6.3" fill="none" stroke="#7a7a7a" stroke-width="1"/></svg>
<svg style="position:absolute;left:67.8px;top:305.25px;" width="10" height="9" viewBox="0 0 10 9"><path d="M0 0.4 H3.8 L4.8 1.4 H9.6 V8.2 H0 Z" fill="#f28c22"/><rect x="0" y="2" width="9.6" height="6.2" fill="#f28c22"/></svg>
<div class="t" style="left:81.5px;top:303.45px;line-height:12px;font-size:8.5px;color:#1b1b1b;letter-spacing:-0.25px;">Indexes</div>
<svg style="position:absolute;left:59.5px;top:318.03999999999996px;" width="5" height="7" viewBox="0 0 5 7"><path d="M0.9 0.7 L3.8 3.5 L0.9 6.3" fill="none" stroke="#7a7a7a" stroke-width="1"/></svg>
<svg style="position:absolute;left:67.8px;top:317.34px;" width="10" height="9" viewBox="0 0 10 9"><path d="M0 0.4 H3.8 L4.8 1.4 H9.6 V8.2 H0 Z" fill="#f28c22"/><rect x="0" y="2" width="9.6" height="6.2" fill="#f28c22"/></svg>
<div class="t" style="left:81.5px;top:315.54px;line-height:12px;font-size:8.5px;color:#1b1b1b;letter-spacing:-0.25px;">Functions</div>
<svg style="position:absolute;left:59.5px;top:330.13px;" width="5" height="7" viewBox="0 0 5 7"><path d="M0.9 0.7 L3.8 3.5 L0.9 6.3" fill="none" stroke="#7a7a7a" stroke-width="1"/></svg>
<svg style="position:absolute;left:67.8px;top:329.43px;" width="10" height="9" viewBox="0 0 10 9"><path d="M0 0.4 H3.8 L4.8 1.4 H9.6 V8.2 H0 Z" fill="#f28c22"/><rect x="0" y="2" width="9.6" height="6.2" fill="#f28c22"/></svg>
<div class="t" style="left:81.5px;top:327.63px;line-height:12px;font-size:8.5px;color:#1b1b1b;letter-spacing:-0.25px;">Sequences</div>
<svg style="position:absolute;left:59.5px;top:342.21999999999997px;" width="5" height="7" viewBox="0 0 5 7"><path d="M0.9 0.7 L3.8 3.5 L0.9 6.3" fill="none" stroke="#7a7a7a" stroke-width="1"/></svg>
<svg style="position:absolute;left:67.8px;top:341.52px;" width="10" height="9" viewBox="0 0 10 9"><path d="M0 0.4 H3.8 L4.8 1.4 H9.6 V8.2 H0 Z" fill="#f28c22"/><rect x="0" y="2" width="9.6" height="6.2" fill="#f28c22"/></svg>
<div class="t" style="left:81.5px;top:339.72px;line-height:12px;font-size:8.5px;color:#1b1b1b;letter-spacing:-0.25px;">Data types</div>
<svg style="position:absolute;left:59.5px;top:354.31px;" width="5" height="7" viewBox="0 0 5 7"><path d="M0.9 0.7 L3.8 3.5 L0.9 6.3" fill="none" stroke="#7a7a7a" stroke-width="1"/></svg>
<svg style="position:absolute;left:67.8px;top:353.61px;" width="10" height="9" viewBox="0 0 10 9"><path d="M0 0.4 H3.8 L4.8 1.4 H9.6 V8.2 H0 Z" fill="#f28c22"/><rect x="0" y="2" width="9.6" height="6.2" fill="#f28c22"/></svg>
<div class="t" style="left:81.5px;top:351.81px;line-height:12px;font-size:8.5px;color:#1b1b1b;letter-spacing:-0.25px;">Aggregate functions</div>
<svg style="position:absolute;left:37.900000000000006px;top:366.4px;" width="5" height="7" viewBox="0 0 5 7"><path d="M0.9 0.7 L3.8 3.5 L0.9 6.3" fill="none" stroke="#7a7a7a" stroke-width="1"/></svg>
<svg style="position:absolute;left:46.2px;top:365.7px;" width="10" height="9" viewBox="0 0 10 9"><path d="M0 0.4 H3.8 L4.8 1.4 H9.6 V8.2 H0 Z" fill="#f28c22"/><rect x="0" y="2" width="9.6" height="6.2" fill="#f28c22"/></svg>
<div class="t" style="left:59.900000000000006px;top:363.90px;line-height:12px;font-size:8.5px;color:#1b1b1b;letter-spacing:-0.25px;">Event Triggers</div>
<svg style="position:absolute;left:37.900000000000006px;top:378.49px;" width="5" height="7" viewBox="0 0 5 7"><path d="M0.9 0.7 L3.8 3.5 L0.9 6.3" fill="none" stroke="#7a7a7a" stroke-width="1"/></svg>
<svg style="position:absolute;left:46.2px;top:377.79px;" width="10" height="9" viewBox="0 0 10 9"><path d="M0 0.4 H3.8 L4.8 1.4 H9.6 V8.2 H0 Z" fill="#f28c22"/><rect x="0" y="2" width="9.6" height="6.2" fill="#f28c22"/><path d="M2 5.5 H8 M6 4 L8 5.5 L6 7" fill="none" stroke="#ffe0c0" stroke-width="0.7"/></svg>
<div class="t" style="left:59.900000000000006px;top:375.99px;line-height:12px;font-size:8.5px;color:#1b1b1b;letter-spacing:-0.25px;">Extensions</div>
<svg style="position:absolute;left:37.900000000000006px;top:390.58px;" width="5" height="7" viewBox="0 0 5 7"><path d="M0.9 0.7 L3.8 3.5 L0.9 6.3" fill="none" stroke="#7a7a7a" stroke-width="1"/></svg>
<svg style="position:absolute;left:46.2px;top:389.88px;" width="10" height="9" viewBox="0 0 10 9"><path d="M0 0.4 H3.8 L4.8 1.4 H9.6 V8.2 H0 Z" fill="#f28c22"/><rect x="0" y="2" width="9.6" height="6.2" fill="#f28c22"/><path d="M2.5 3.5 V7" stroke="#ffe0c0" stroke-width="0.7"/></svg>
<div class="t" style="left:59.900000000000006px;top:388.08px;line-height:12px;font-size:8.5px;color:#1b1b1b;letter-spacing:-0.25px;">Storage</div>
<svg style="position:absolute;left:37.900000000000006px;top:402.66999999999996px;" width="5" height="7" viewBox="0 0 5 7"><path d="M0.9 0.7 L3.8 3.5 L0.9 6.3" fill="none" stroke="#7a7a7a" stroke-width="1"/></svg>
<svg style="position:absolute;left:46.2px;top:401.96999999999997px;" width="10" height="9" viewBox="0 0 10 9"><path d="M0 0.4 H3.8 L4.8 1.4 H9.6 V8.2 H0 Z" fill="#f28c22"/><rect x="0" y="2" width="9.6" height="6.2" fill="#f28c22"/></svg>
<div class="t" style="left:59.900000000000006px;top:400.17px;line-height:12px;font-size:8.5px;color:#1b1b1b;letter-spacing:-0.25px;">System Info</div>
</div>
<div style="position:absolute;left:339.5px;top:166.42999999999998px;width:34px;height:10.6px;border:1px solid #f0f0f0;box-sizing:border-box;background:#fff;"></div>
<div class="t" style="left:339.5px;top:165.43px;line-height:12px;font-size:8.5px;color:#222;letter-spacing:-0.45px;width:33.5px;text-align:right;">16K</div>
<div style="position:absolute;left:339.5px;top:178.52px;width:34px;height:10.6px;border:1px solid #f0f0f0;box-sizing:border-box;background:#fff;"></div>
<div class="t" style="left:339.5px;top:177.52px;line-height:12px;font-size:8.5px;color:#222;letter-spacing:-0.45px;width:33.5px;text-align:right;">16K</div>
<div style="position:absolute;left:339.5px;top:190.60999999999999px;width:34px;height:10.6px;border:1px solid #f0f0f0;box-sizing:border-box;background:#fff;"></div>
<div class="t" style="left:339.5px;top:189.61px;line-height:12px;font-size:8.5px;color:#222;letter-spacing:-0.45px;width:33.5px;text-align:right;">8K</div>
<div style="position:absolute;left:339.5px;top:202.70000000000002px;width:34px;height:10.6px;border:1px solid #f0f0f0;box-sizing:border-box;background:#fff;"></div>
<div class="t" style="left:339.5px;top:201.70px;line-height:12px;font-size:8.5px;color:#222;letter-spacing:-0.45px;width:33.5px;text-align:right;">16K</div>
<div style="position:absolute;left:339.5px;top:214.79px;width:34px;height:10.6px;border:1px solid #f0f0f0;box-sizing:border-box;background:#fff;"></div>
<div class="t" style="left:339.5px;top:213.79px;line-height:12px;font-size:8.5px;color:#222;letter-spacing:-0.45px;width:33.5px;text-align:right;">8K</div>
<div style="position:absolute;left:339.5px;top:226.87999999999997px;width:34px;height:10.6px;border:1px solid #f0f0f0;box-sizing:border-box;background:#fff;"></div>
<div class="t" style="left:339.5px;top:225.88px;line-height:12px;font-size:8.5px;color:#222;letter-spacing:-0.45px;width:33.5px;text-align:right;">32K</div>
<div style="position:absolute;left:339.5px;top:238.97px;width:34px;height:10.6px;border:1px solid #f0f0f0;box-sizing:border-box;background:#fff;"></div>
<div class="t" style="left:339.5px;top:237.97px;line-height:12px;font-size:8.5px;color:#222;letter-spacing:-0.45px;width:33.5px;text-align:right;">40K</div>
<div style="position:absolute;left:339.5px;top:251.05999999999997px;width:34px;height:10.6px;border:1px solid #f0f0f0;box-sizing:border-box;background:#fff;"></div>
<div class="t" style="left:339.5px;top:250.06px;line-height:12px;font-size:8.5px;color:#222;letter-spacing:-0.45px;width:33.5px;text-align:right;">16K</div>
<div style="position:absolute;left:339.5px;top:263.15000000000003px;width:34px;height:10.6px;border:1px solid #f0f0f0;box-sizing:border-box;background:#fff;"></div>
<div class="t" style="left:339.5px;top:262.15px;line-height:12px;font-size:8.5px;color:#222;letter-spacing:-0.45px;width:33.5px;text-align:right;">16K</div>
<div style="position:absolute;left:339.5px;top:275.24px;width:34px;height:10.6px;border:1px solid #f0f0f0;box-sizing:border-box;background:#fff;"></div>
<div class="t" style="left:339.5px;top:274.24px;line-height:12px;font-size:8.5px;color:#222;letter-spacing:-0.45px;width:33.5px;text-align:right;">24K</div>
<div style="position:absolute;left:339.5px;top:287.33000000000004px;width:34px;height:10.6px;border:1px solid #f0f0f0;box-sizing:border-box;background:#fff;"></div>
<div class="t" style="left:339.5px;top:286.33px;line-height:12px;font-size:8.5px;color:#222;letter-spacing:-0.45px;width:33.5px;text-align:right;">8K</div>
<div style="position:absolute;left:339.5px;top:299.42px;width:34px;height:10.6px;border:1px solid #f0f0f0;box-sizing:border-box;background:#fff;"></div>
<div style="position:absolute;left:340.5px;top:300.42px;width:32px;height:8.6px;background:#ededed;"></div>
<div class="t" style="left:339.5px;top:298.42px;line-height:12px;font-size:8.5px;color:#222;letter-spacing:-0.45px;width:33.5px;text-align:right;">416K</div>
<div style="position:absolute;left:339.5px;top:311.51000000000005px;width:34px;height:10.6px;border:1px solid #f0f0f0;box-sizing:border-box;background:#fff;"></div>
<div class="t" style="left:339.5px;top:310.51px;line-height:12px;font-size:8.5px;color:#222;letter-spacing:-0.45px;width:33.5px;text-align:right;">48K</div>
<div style="position:absolute;left:339.5px;top:323.6px;width:34px;height:10.6px;border:1px solid #f0f0f0;box-sizing:border-box;background:#fff;"></div>
<div class="t" style="left:339.5px;top:322.60px;line-height:12px;font-size:8.5px;color:#222;letter-spacing:-0.45px;width:33.5px;text-align:right;">32K</div>
<div style="position:absolute;left:339.5px;top:335.69px;width:34px;height:10.6px;border:1px solid #f0f0f0;box-sizing:border-box;background:#fff;"></div>
<div class="t" style="left:339.5px;top:334.69px;line-height:12px;font-size:8.5px;color:#222;letter-spacing:-0.45px;width:33.5px;text-align:right;">24K</div>
<div style="position:absolute;left:0px;top:80px;width:1px;height:405px;background:#dedede;"></div>
<div style="position:absolute;left:0px;top:485px;width:386px;height:4px;background:#f0f0f0;"></div>
<div style="position:absolute;left:0px;top:489px;width:386px;height:17px;background:#e8e8e8;"></div>
<div style="position:absolute;left:0px;top:489px;width:93px;height:17px;background:#f3f3f3;"></div>
<div class="t" style="left:16.5px;top:491.50px;line-height:12px;font-size:8.5px;color:#333;letter-spacing:-0.25px;">Project - General</div>
<svg style="position:absolute;left:3.5px;top:493px;" width="10" height="9" viewBox="0 0 10 9"><rect x="0.5" y="0.5" width="9" height="8" fill="#3aa0e8" stroke="#1a80d0" stroke-width="0.8"/><path d="M1 3.5 H9 M1 6 H9 M3.7 3.5 V8.5 M6.3 3.5 V8.5" stroke="#9dd0f5" stroke-width="0.6"/></svg>
<svg style="position:absolute;left:80.5px;top:493.5px;" width="8" height="8" viewBox="0 0 8 8"><path d="M0.8 0.8 L7.2 7.2 M7.2 0.8 L0.8 7.2" stroke="#555" stroke-width="0.9"/></svg>
<svg style="position:absolute;left:292.5px;top:492px;" width="10" height="10" viewBox="0 0 10 10"><path d="M5.00 0.20 L5.94 0.29 L6.34 1.77 L6.94 2.09 L8.39 1.61 L8.99 2.33 L8.23 3.66 L8.43 4.32 L9.80 5.00 L9.71 5.94 L8.23 6.34 L7.91 6.94 L8.39 8.39 L7.67 8.99 L6.34 8.23 L5.68 8.43 L5.00 9.80 L4.06 9.71 L3.66 8.23 L3.06 7.91 L1.61 8.39 L1.01 7.67 L1.77 6.34 L1.57 5.68 L0.20 5.00 L0.29 4.06 L1.77 3.66 L2.09 3.06 L1.61 1.61 L2.33 1.01 L3.66 1.77 L4.32 1.57 Z" fill="#1a86d8"/><circle cx="5" cy="5" r="1.5" fill="#a8d6f7"/></svg>
<svg style="position:absolute;left:310px;top:495px;" width="10" height="4" viewBox="0 0 10 4"><path d="M0.5 2.5 L9 1.5" stroke="#3a8fd6" stroke-width="1.6"/></svg>
<svg style="position:absolute;left:325px;top:492px;" width="10" height="10" viewBox="0 0 10 10"><path d="M1 5.5 H9 M5.5 1 V9" stroke="#3a8fd6" stroke-width="1.4"/></svg>
<svg style="position:absolute;left:340px;top:493px;" width="12" height="9" viewBox="0 0 12 9"><path d="M1 3 H10 M8 1 L10.5 3 L8 5" fill="none" stroke="#2a8ad8" stroke-width="1.3"/><path d="M11 6.5 H2 M4 4.5 L1.5 6.5 L4 8.5" fill="none" stroke="#2aa84a" stroke-width="1.3"/></svg>
<svg style="position:absolute;left:357px;top:493.2px;" width="9" height="5" viewBox="0 0 9 5"><rect x="0.6" y="0.6" width="7" height="2.6" rx="0.8" fill="none" stroke="#333" stroke-width="1"/></svg>
<svg style="position:absolute;left:373.0px;top:493.5px;" width="9" height="9" viewBox="0 0 9 9"><rect x="0.6" y="0.6" width="7" height="6.6" fill="none" stroke="#333" stroke-width="1.1"/><path d="M0.6 1.9 H7.6" stroke="#333" stroke-width="1.5"/></svg>
<div style="position:absolute;left:0px;top:506px;width:386px;height:169px;background:#fff;"></div>
<div style="position:absolute;left:0px;top:506px;width:1px;height:169px;background:#dedede;"></div>
<div class="t" style="left:5px;top:508.30px;line-height:12px;font-size:8.5px;color:#333;letter-spacing:-0.25px;">Name</div>
<div class="t" style="left:173px;top:508.30px;line-height:12px;font-size:8.5px;color:#333;letter-spacing:-0.25px;">DataSource</div>
<div style="position:absolute;left:170px;top:507px;width:1px;height:14px;background:#e6e6e6;"></div>
<div style="position:absolute;left:285px;top:507px;width:1px;height:14px;background:#e6e6e6;"></div>
<svg style="position:absolute;left:6px;top:524.7px;" width="5" height="7" viewBox="0 0 5 7"><path d="M0.9 0.7 L3.8 3.5 L0.9 6.3" fill="none" stroke="#7a7a7a" stroke-width="1"/></svg>
<svg style="position:absolute;left:13.5px;top:524.0px;" width="10" height="9" viewBox="0 0 10 9"><path d="M0 0.4 H3.8 L4.8 1.4 H9.6 V8.2 H0 Z" fill="#f28c22"/><rect x="0" y="2" width="9.6" height="6.2" fill="#f28c22"/><path d="M1.8 4.3 H8 M1.8 6.3 H8 M3.8 3.3 V7.5 M6 3.3 V7.5" stroke="#ffd9b0" stroke-width="0.6"/></svg>
<svg style="position:absolute;left:19px;top:528.2px;" width="6" height="6" viewBox="0 0 6 6"><path d="M3 0.3 L3.8 2.2 L5.7 2.3 L4.2 3.5 L4.8 5.5 L3 4.3 L1.2 5.5 L1.8 3.5 L0.3 2.3 L2.2 2.2 Z" fill="#e85a1a"/></svg>
<div class="t" style="left:27.5px;top:522.20px;line-height:12px;font-size:8.5px;color:#1b1b1b;letter-spacing:-0.25px;">Bookmarks</div>
<svg style="position:absolute;left:6px;top:536.7900000000001px;" width="5" height="7" viewBox="0 0 5 7"><path d="M0.9 0.7 L3.8 3.5 L0.9 6.3" fill="none" stroke="#7a7a7a" stroke-width="1"/></svg>
<svg style="position:absolute;left:13.5px;top:536.09px;" width="10" height="9" viewBox="0 0 10 9"><path d="M0 0.4 H3.8 L4.8 1.4 H9.6 V8.2 H0 Z" fill="#f28c22"/><rect x="0" y="2" width="9.6" height="6.2" fill="#f28c22"/><path d="M1.8 4.3 H8 M1.8 6.3 H8 M3.8 3.3 V7.5 M6 3.3 V7.5" stroke="#ffd9b0" stroke-width="0.6"/></svg>
<div class="t" style="left:27.5px;top:534.29px;line-height:12px;font-size:8.5px;color:#1b1b1b;letter-spacing:-0.25px;">Dashboards</div>
<svg style="position:absolute;left:6px;top:548.88px;" width="5" height="7" viewBox="0 0 5 7"><path d="M0.9 0.7 L3.8 3.5 L0.9 6.3" fill="none" stroke="#7a7a7a" stroke-width="1"/></svg>
<svg style="position:absolute;left:13.5px;top:548.18px;" width="10" height="9" viewBox="0 0 10 9"><path d="M0 0.4 H3.8 L4.8 1.4 H9.6 V8.2 H0 Z" fill="#f28c22"/><rect x="0" y="2" width="9.6" height="6.2" fill="#f28c22"/><path d="M1.8 4.3 H8 M1.8 6.3 H8 M3.8 3.3 V7.5 M6 3.3 V7.5" stroke="#ffd9b0" stroke-width="0.6"/></svg>
<div class="t" style="left:27.5px;top:546.38px;line-height:12px;font-size:8.5px;color:#1b1b1b;letter-spacing:-0.25px;">Diagrams</div>
<svg style="position:absolute;left:6px;top:560.97px;" width="5" height="7" viewBox="0 0 5 7"><path d="M0.9 0.7 L3.8 3.5 L0.9 6.3" fill="none" stroke="#7a7a7a" stroke-width="1"/></svg>
<svg style="position:absolute;left:13.5px;top:560.27px;" width="10" height="9" viewBox="0 0 10 9"><path d="M0 0.4 H3.8 L4.8 1.4 H9.6 V8.2 H0 Z" fill="#f28c22"/><rect x="0" y="2" width="9.6" height="6.2" fill="#f28c22"/><rect x="2.3" y="3" width="3.6" height="4.2" fill="none" stroke="#ffd9b0" stroke-width="0.7"/></svg>
<div class="t" style="left:27.5px;top:558.47px;line-height:12px;font-size:8.5px;color:#1b1b1b;letter-spacing:-0.25px;">Scripts</div>
<div style="position:absolute;left:386px;top:48px;width:4px;height:627px;background:#f0f0f0;"></div>
<div style="position:absolute;left:386px;top:48.5px;width:1px;height:626.5px;background:#dcdcdc;"></div>
<div style="position:absolute;left:390px;top:48px;width:902px;height:18px;background:#f0f0f0;border-top:1px solid #dcdcdc;box-sizing:border-box;"></div>
<div style="position:absolute;left:390px;top:65px;width:902px;height:1px;background:#dadada;"></div>
<div style="position:absolute;left:390.5px;top:49px;width:55px;height:16px;background:#fff;"></div>
<div style="position:absolute;left:390.5px;top:64.5px;width:55px;height:1.5px;background:#3a8fd6;"></div>
<div class="t" style="left:406px;top:51.00px;line-height:12px;font-size:8.5px;color:#333;letter-spacing:-0.25px;">public</div>
<div style="position:absolute;left:390px;top:66px;width:902px;height:21px;background:#f0f0f0;"></div>
<div style="position:absolute;left:445px;top:66px;width:59.5px;height:21px;background:#fff;border-top:1.5px solid #1e7ed6;border-right:1px solid #c8c8c8;box-sizing:border-box;"></div>
<div class="t" style="left:407px;top:71.00px;line-height:12px;font-size:8.5px;color:#333;letter-spacing:-0.25px;">Properties</div>
<div class="t" style="left:461px;top:71.00px;line-height:12px;font-size:8.5px;color:#333;letter-spacing:-0.5px;">ER Diagram</div>
<svg style="position:absolute;left:394px;top:52px;" width="9" height="11" viewBox="0 0 9 11"><path d="M0.5 0.5 H6 L8.5 3 V10.5 H0.5 Z" fill="#fff" stroke="#5b9bd5" stroke-width="1"/><path d="M2.3 3.8 H6.8 M2.3 5.8 H6.8 M2.3 7.8 H6.8" stroke="#5b9bd5" stroke-width="0.8"/></svg>
<svg style="position:absolute;left:434px;top:53.5px;" width="8" height="8" viewBox="0 0 8 8"><path d="M0.8 0.8 L7.2 7.2 M7.2 0.8 L0.8 7.2" stroke="#555" stroke-width="0.9"/></svg>
<svg style="position:absolute;left:1262px;top:54.2px;" width="9" height="5" viewBox="0 0 9 5"><rect x="0.6" y="0.6" width="7" height="2.6" rx="0.8" fill="none" stroke="#333" stroke-width="1"/></svg>
<svg style="position:absolute;left:1278.0px;top:54px;" width="9" height="9" viewBox="0 0 9 9"><rect x="0.6" y="0.6" width="7" height="6.6" fill="none" stroke="#333" stroke-width="1.1"/><path d="M0.6 1.9 H7.6" stroke="#333" stroke-width="1.5"/></svg>
<svg style="position:absolute;left:394px;top:71.5px;" width="9" height="11" viewBox="0 0 9 11"><path d="M0.5 0.5 H6 L8.5 3 V10.5 H0.5 Z" fill="#fff" stroke="#5b9bd5" stroke-width="1"/><path d="M2.3 3.8 H6.8 M2.3 5.8 H6.8 M2.3 7.8 H6.8" stroke="#5b9bd5" stroke-width="0.8"/></svg>
<svg style="position:absolute;left:447.5px;top:70.5px;" width="12" height="12" viewBox="0 0 12 12"><rect x="4.5" y="0.5" width="3" height="3" fill="#2a8ad8"/><path d="M6 3.5 V5.5 M2 5.5 H10 V7.5 M2 5.5 V7.5 M6 5.5 V7.5" stroke="#2a8ad8" stroke-width="0.9" fill="none"/><rect x="0.5" y="7.5" width="3" height="3.5" fill="none" stroke="#2a8ad8" stroke-width="1"/><rect x="4.5" y="7.5" width="3" height="3.5" fill="none" stroke="#2a8ad8" stroke-width="1"/><rect x="8.5" y="7.5" width="3" height="3.5" fill="none" stroke="#2a8ad8" stroke-width="1"/></svg>
<svg style="position:absolute;left:1009px;top:71.6px;" width="11" height="11" viewBox="0 0 11 11"><path d="M0.5 1.5 Q0.5 0.3 4.5 0.3 Q8.5 0.3 8.5 1.5 V5.5 Q8.5 6.8 7 6.8 V9 H2 V6.8 Q0.5 6.8 0.5 5.5 Z" fill="#4d709b"/><path d="M3 1.8 V5 M6 1.8 V5" stroke="#b8cde2" stroke-width="0.8"/><rect x="4.6" y="4.8" width="5" height="5" fill="#27a545"/><path d="M5.5 7.3 L6.8 8.5 L8.8 6" stroke="#fff" stroke-width="0.9" fill="none"/></svg>
<div class="t" style="left:1023px;top:70.60px;line-height:12px;font-size:8.5px;color:#222;letter-spacing:-0.25px;">postgres</div>
<svg style="position:absolute;left:1062.5px;top:72.39999999999999px;" width="10" height="9" viewBox="0 0 10 9"><path d="M0 0.4 H3.8 L4.8 1.4 H9.6 V8.2 H0 Z" fill="#f28c22"/><rect x="0" y="2" width="9.6" height="6.2" fill="#f28c22"/><rect x="2.3" y="3" width="3.6" height="4.2" fill="none" stroke="#ffd9b0" stroke-width="0.7"/></svg>
<div class="t" style="left:1077px;top:70.60px;line-height:12px;font-size:8.5px;color:#222;letter-spacing:-0.25px;">Databases</div>
<svg style="position:absolute;left:1120.5px;top:74.6px;" width="6" height="4" viewBox="0 0 6 4"><path d="M0.3 0.5 H5.3 L2.8 3.3 Z" fill="#333"/></svg>
<svg style="position:absolute;left:1132px;top:71.89999999999999px;" width="9" height="10" viewBox="0 0 9 10"><rect x="0.5" y="0.5" width="8" height="8.6" rx="2.6" fill="#a6d2f2" stroke="#5aa0dc" stroke-width="1"/><path d="M1.5 3.4 H7.5 M1.5 6.1 H7.5" stroke="#fff" stroke-width="0.9"/></svg>
<div class="t" style="left:1145px;top:70.60px;line-height:12px;font-size:8.5px;color:#222;letter-spacing:-0.25px;">postgres</div>
<svg style="position:absolute;left:1185px;top:72.39999999999999px;" width="10" height="9" viewBox="0 0 10 9"><path d="M0 0.4 H3.8 L4.8 1.4 H9.6 V8.2 H0 Z" fill="#f28c22"/><rect x="0" y="2" width="9.6" height="6.2" fill="#f28c22"/><rect x="2.3" y="3" width="3.6" height="4.2" fill="none" stroke="#ffd9b0" stroke-width="0.7"/></svg>
<div class="t" style="left:1199px;top:70.60px;line-height:12px;font-size:8.5px;color:#222;letter-spacing:-0.25px;">Schemas</div>
<svg style="position:absolute;left:1238.5px;top:74.6px;" width="6" height="4" viewBox="0 0 6 4"><path d="M0.3 0.5 H5.3 L2.8 3.3 Z" fill="#333"/></svg>
<svg style="position:absolute;left:1249.5px;top:71.6px;" width="9" height="10" viewBox="0 0 9 10"><path d="M0.5 0.5 H6 L8.5 3 V9.5 H0.5 Z" fill="#f4f9fe" stroke="#5b9bd5" stroke-width="1"/><path d="M2.3 3.5 H3.3 M4.3 3.5 H6.8 M2.3 5.5 H3.3 M4.3 5.5 H6.8 M2.3 7.5 H3.3 M4.3 7.5 H6.8" stroke="#5b9bd5" stroke-width="0.8"/></svg>
<div class="t" style="left:1262px;top:70.60px;line-height:12px;font-size:8.5px;color:#222;letter-spacing:-0.25px;">public</div>
<div style="position:absolute;left:390px;top:86.5px;width:902px;height:1px;background:#c8c8c8;"></div>
<div style="position:absolute;left:390px;top:87.5px;width:883px;height:569.5px;background:#fff;"></div>
<div style="position:absolute;left:1272.5px;top:87.5px;width:11px;height:569.5px;background:#efefef;"></div>
<div style="position:absolute;left:1277px;top:98.3px;width:1.8px;height:268.6px;background:#999;"></div>
<div style="position:absolute;left:1283.5px;top:87.5px;width:1px;height:569.5px;background:#bbb;"></div>
<div style="position:absolute;left:1284.5px;top:87.5px;width:7px;height:569.5px;background:#fafafa;"></div>
<div style="position:absolute;left:1291.3px;top:87.5px;width:0.7px;height:569.5px;background:#aaa;"></div>
<div style="position:absolute;left:1284.5px;top:87.5px;width:7px;height:15.5px;background:#fff;"></div>
<svg style="position:absolute;left:1286px;top:92px;" width="6" height="8" viewBox="0 0 6 8"><path d="M5 0.8 L1 4 L5 7.2 Z" fill="none" stroke="#777" stroke-width="0.8"/></svg>
<div style="position:absolute;left:1284px;top:103px;width:8px;height:1px;background:#ccc;"></div>
<svg style="position:absolute;left:0;top:0;" width="1292" height="726" viewBox="0 0 1292 726"><defs><clipPath id="dc"><rect x="390" y="87.5" width="882.5" height="569.5"/></clipPath></defs><g clip-path="url(#dc)" font-family="Liberation Sans, sans-serif"><path d="M778.5,220.7 H849.5" fill="none" stroke="#41a6de" stroke-width="1"/><path d="M786.00,216.90 V224.50 M778.50,217.00 L786.00,220.70 L778.50,224.40 M778.50,220.70 H786.00" fill="none" stroke="#41a6de" stroke-width="1"/><path d="M842.30,216.90 V224.50" stroke="#41a6de" stroke-width="1.1"/><path d="M838.80,216.90 V224.50" stroke="#41a6de" stroke-width="1.1"/><text x="781.00" y="216.30" font-size="7.4" fill="#7d7d7d" letter-spacing="-0.1">1..n</text><text x="843.70" y="216.30" font-size="7.4" fill="#7d7d7d" letter-spacing="-0.1">1</text><path d="M761.5,315.5 H782.5 L829.4,254.3 H849.5" fill="none" stroke="#41a6de" stroke-width="1"/><path d="M769.00,311.70 V319.30 M761.50,311.80 L769.00,315.50 L761.50,319.20 M761.50,315.50 H769.00" fill="none" stroke="#41a6de" stroke-width="1"/><path d="M842.30,250.50 V258.10" stroke="#41a6de" stroke-width="1.1"/><path d="M838.80,250.50 V258.10" stroke="#41a6de" stroke-width="1.1"/><text x="764.00" y="311.70" font-size="7.4" fill="#7d7d7d" letter-spacing="-0.1">1..n</text><text x="843.70" y="250.20" font-size="7.4" fill="#7d7d7d" letter-spacing="-0.1">1</text><path d="M761.5,352.1 H782.7 L828.9,394.4 H850.3" fill="none" stroke="#41a6de" stroke-width="1"/><path d="M769.00,348.30 V355.90 M761.50,348.40 L769.00,352.10 L761.50,355.80 M761.50,352.10 H769.00" fill="none" stroke="#41a6de" stroke-width="1"/><path d="M843.10,390.60 V398.20" stroke="#41a6de" stroke-width="1.1"/><path d="M839.60,390.60 V398.20" stroke="#41a6de" stroke-width="1.1"/><text x="764.00" y="348.20" font-size="7.4" fill="#7d7d7d" letter-spacing="-0.1">1..n</text><text x="843.70" y="390.20" font-size="7.4" fill="#7d7d7d" letter-spacing="-0.1">1</text><path d="M760.9,416.5 V395.1 L829.4,290.4 H849.5" fill="none" stroke="#41a6de" stroke-width="1"/><path d="M757.10,409.00 H764.70 M757.40,416.50 L760.90,409.00 L764.40,416.50" fill="none" stroke="#41a6de" stroke-width="1"/><path d="M842.30,286.60 V294.20" stroke="#41a6de" stroke-width="1.1"/><path d="M838.80,286.60 V294.20" stroke="#41a6de" stroke-width="1.1"/><text x="745.00" y="411.70" font-size="7.4" fill="#7d7d7d" letter-spacing="-0.1">1..n</text><text x="843.70" y="286.20" font-size="7.4" fill="#7d7d7d" letter-spacing="-0.1">1</text><path d="M775,467.6 H795.9 L829.1,507.6 H850.3" fill="none" stroke="#41a6de" stroke-width="1"/><path d="M782.50,463.80 V471.40 M775.00,463.90 L782.50,467.60 L775.00,471.30 M775.00,467.60 H782.50" fill="none" stroke="#41a6de" stroke-width="1"/><path d="M843.10,503.80 V511.40" stroke="#41a6de" stroke-width="1.1"/><path d="M839.60,503.80 V511.40" stroke="#41a6de" stroke-width="1.1"/><text x="778.00" y="463.70" font-size="7.4" fill="#7d7d7d" letter-spacing="-0.1">1..n</text><text x="843.70" y="503.20" font-size="7.4" fill="#7d7d7d" letter-spacing="-0.1">1</text><path d="M947.4,220.4 H995.7" fill="none" stroke="#41a6de" stroke-width="1"/><path d="M954.90,216.60 V224.20 M947.40,216.70 L954.90,220.40 L947.40,224.10 M947.40,220.40 H954.90" fill="none" stroke="#41a6de" stroke-width="1"/><path d="M988.50,216.60 V224.20" stroke="#41a6de" stroke-width="1.1"/><path d="M985.00,216.60 V224.20" stroke="#41a6de" stroke-width="1.1"/><text x="950.50" y="216.20" font-size="7.4" fill="#7d7d7d" letter-spacing="-0.1">1..n</text><text x="988.50" y="216.20" font-size="7.4" fill="#7d7d7d" letter-spacing="-0.1">1</text><path d="M609.2,533.7 V511.8 L699.7,303.3 L721.4,279.1 V257.4" fill="none" stroke="#41a6de" stroke-width="1"/><path d="M605.40,526.20 H613.00 M605.70,533.70 L609.20,526.20 L612.70,533.70" fill="none" stroke="#41a6de" stroke-width="1"/><path d="M717.70,265.20 H725.10" stroke="#41a6de" stroke-width="1.1"/><path d="M717.70,268.50 H725.10" stroke="#41a6de" stroke-width="1.1"/><text x="594.00" y="529.70" font-size="7.4" fill="#7d7d7d" letter-spacing="-0.1">1..n</text><text x="713.80" y="268.20" font-size="7.4" fill="#7d7d7d" letter-spacing="-0.1">1</text><path d="M621.5,598.2 H702.7" fill="none" stroke="#41a6de" stroke-width="1"/><path d="M629.00,594.40 V602.00 M621.50,594.50 L629.00,598.20 L621.50,601.90 M621.50,598.20 H629.00" fill="none" stroke="#41a6de" stroke-width="1"/><path d="M695.50,594.40 V602.00" stroke="#41a6de" stroke-width="1.1"/><path d="M692.00,594.40 V602.00" stroke="#41a6de" stroke-width="1.1"/><text x="624.00" y="594.20" font-size="7.4" fill="#7d7d7d" letter-spacing="-0.1">1..n</text><text x="696.50" y="593.70" font-size="7.4" fill="#7d7d7d" letter-spacing="-0.1">1</text><path d="M546,626.5 H524.8 L519.3,660" fill="none" stroke="#41a6de" stroke-width="1"/><path d="M538.80,622.70 V630.30" stroke="#41a6de" stroke-width="1.1"/><path d="M535.30,622.70 V630.30" stroke="#41a6de" stroke-width="1.1"/><text x="539.50" y="621.70" font-size="7.4" fill="#7d7d7d" letter-spacing="-0.1">1</text><text x="500.00" y="655.70" font-size="7.4" fill="#7d7d7d" letter-spacing="-0.1">1..n</text><path d="M621.5,650.2 H643 L646,660" fill="none" stroke="#41a6de" stroke-width="1"/><path d="M629.00,646.40 V654.00 M621.50,646.50 L629.00,650.20 L621.50,653.90 M621.50,650.20 H629.00" fill="none" stroke="#41a6de" stroke-width="1"/><text x="624.00" y="646.20" font-size="7.4" fill="#7d7d7d" letter-spacing="-0.1">1..n</text><path d="M702.7,620.6 H681.5 L633,660" fill="none" stroke="#41a6de" stroke-width="1"/><path d="M695.50,616.80 V624.40" stroke="#41a6de" stroke-width="1.1"/><path d="M692.00,616.80 V624.40" stroke="#41a6de" stroke-width="1.1"/><text x="696.50" y="615.20" font-size="7.4" fill="#7d7d7d" letter-spacing="-0.1">1</text><path d="M777.7,652.9 H798.7 L800.5,660" fill="none" stroke="#41a6de" stroke-width="1"/><path d="M785.20,649.10 V656.70 M777.70,649.20 L785.20,652.90 L777.70,656.60 M777.70,652.90 H785.20" fill="none" stroke="#41a6de" stroke-width="1"/><text x="781.00" y="649.70" font-size="7.4" fill="#7d7d7d" letter-spacing="-0.1">1..n</text><rect x="849.60" y="114.50" width="97.80" height="210.00" fill="#fff"/><rect x="849.60" y="114.50" width="97.80" height="16.5" fill="#fdfddf"/><line x1="849.60" y1="131.30" x2="947.40" y2="131.30" stroke="#9fd0ef" stroke-width="1.1"/><line x1="849.60" y1="146.50" x2="947.40" y2="146.50" stroke="#9fd0ef" stroke-width="1.1"/><text x="898.69" y="125.90" font-size="8.5" fill="#1b1b1b" font-weight="normal" text-anchor="start" letter-spacing="-0.25" stroke="#1b1b1b" stroke-width="0.2">film</text><rect x="886.09" y="118.90" width="9.6" height="7.8" fill="#6aaee6"/><rect x="886.09" y="118.90" width="9.6" height="1.9" fill="#2f86d6"/><rect x="887.29" y="121.70" width="3.2" height="1.8" fill="#fff"/><rect x="891.39" y="121.70" width="3.2" height="1.8" fill="#fff"/><rect x="887.29" y="124.20" width="3.2" height="1.7" fill="#fff"/><rect x="891.39" y="124.20" width="3.2" height="1.7" fill="#fff"/><text transform="translate(852.70,141.90) scale(0.8,1)" font-size="8" fill="#3f8ad6" stroke="#3f8ad6" stroke-width="0.3">123</text><path d="M858.70,143.00 h2.5" stroke="#f08a24" stroke-width="0.9"/><circle cx="862.00" cy="143.00" r="0.9" fill="none" stroke="#f08a24" stroke-width="0.7"/><text x="865.80" y="142.20" font-size="8.5" fill="#1b1b1b" font-weight="bold" text-anchor="start" letter-spacing="-0.35" stroke="#1b1b1b" stroke-width="0.2">film_id</text><text transform="translate(852.70,157.30) scale(0.85,1)" font-size="7" fill="#3d8ad0" font-weight="bold">A-Z</text><text x="865.80" y="157.90" font-size="8.5" fill="#1b1b1b" font-weight="normal" text-anchor="start" letter-spacing="-0.25" stroke="#1b1b1b" stroke-width="0.2">title</text><text transform="translate(852.70,170.80) scale(0.85,1)" font-size="7" fill="#3d8ad0" font-weight="bold">A-Z</text><text x="865.80" y="171.40" font-size="8.5" fill="#1b1b1b" font-weight="normal" text-anchor="start" letter-spacing="-0.25" stroke="#1b1b1b" stroke-width="0.2">description</text><text transform="translate(852.70,184.60) scale(0.8,1)" font-size="8" fill="#3f8ad6" stroke="#3f8ad6" stroke-width="0.3">123</text><text x="865.80" y="184.90" font-size="8.5" fill="#1b1b1b" font-weight="normal" text-anchor="start" letter-spacing="-0.25" stroke="#1b1b1b" stroke-width="0.2">release_year</text><text transform="translate(852.70,198.10) scale(0.8,1)" font-size="8" fill="#3f8ad6" stroke="#3f8ad6" stroke-width="0.3">123</text><text x="865.80" y="198.40" font-size="8.5" fill="#1b1b1b" font-weight="normal" text-anchor="start" letter-spacing="-0.25" stroke="#1b1b1b" stroke-width="0.2">language_id</text><text transform="translate(852.70,211.60) scale(0.8,1)" font-size="8" fill="#3f8ad6" stroke="#3f8ad6" stroke-width="0.3">123</text><text x="865.80" y="211.90" font-size="8.5" fill="#1b1b1b" font-weight="normal" text-anchor="start" letter-spacing="-0.25" stroke="#1b1b1b" stroke-width="0.2">rental_duration</text><text transform="translate(852.70,225.10) scale(0.8,1)" font-size="8" fill="#3f8ad6" stroke="#3f8ad6" stroke-width="0.3">123</text><text x="865.80" y="225.40" font-size="8.5" fill="#1b1b1b" font-weight="normal" text-anchor="start" letter-spacing="-0.25" stroke="#1b1b1b" stroke-width="0.2">rental_rate</text><text transform="translate(852.70,238.60) scale(0.8,1)" font-size="8" fill="#3f8ad6" stroke="#3f8ad6" stroke-width="0.3">123</text><text x="865.80" y="238.90" font-size="8.5" fill="#1b1b1b" font-weight="normal" text-anchor="start" letter-spacing="-0.25" stroke="#1b1b1b" stroke-width="0.2">length</text><text transform="translate(852.70,252.10) scale(0.8,1)" font-size="8" fill="#3f8ad6" stroke="#3f8ad6" stroke-width="0.3">123</text><text x="865.80" y="252.40" font-size="8.5" fill="#1b1b1b" font-weight="normal" text-anchor="start" letter-spacing="-0.25" stroke="#1b1b1b" stroke-width="0.2">replacement_cost</text><text transform="translate(852.70,265.30) scale(0.85,1)" font-size="7" fill="#3d8ad0" font-weight="bold">A-Z</text><text x="865.80" y="265.90" font-size="8.5" fill="#1b1b1b" font-weight="normal" text-anchor="start" letter-spacing="-0.25" stroke="#1b1b1b" stroke-width="0.2">rating</text><circle cx="857.20" cy="276.20" r="4" fill="none" stroke="#4a8fd4" stroke-width="0.9"/><path d="M858.20,273.70 L857.00,276.70 L855.30,278.20" fill="none" stroke="#4a8fd4" stroke-width="0.8"/><text x="865.80" y="279.40" font-size="8.5" fill="#1b1b1b" font-weight="normal" text-anchor="start" letter-spacing="-0.25" stroke="#1b1b1b" stroke-width="0.2">mod_ts</text><rect x="853.20" y="285.70" width="3.2" height="3.2" fill="none" stroke="#4a8fd4" stroke-width="0.8"/><rect x="853.20" y="290.50" width="3.2" height="3.2" fill="none" stroke="#4a8fd4" stroke-width="0.8"/><rect x="858.20" y="285.70" width="3.2" height="3.2" fill="none" stroke="#4a8fd4" stroke-width="0.8"/><rect x="858.20" y="290.50" width="3.2" height="3.2" fill="none" stroke="#4a8fd4" stroke-width="0.8"/><text x="865.80" y="292.90" font-size="8.5" fill="#1b1b1b" font-weight="normal" text-anchor="start" letter-spacing="-0.25" stroke="#1b1b1b" stroke-width="0.2">special_features</text><rect x="853.20" y="299.20" width="8" height="8" fill="none" stroke="#4a8fd4" stroke-width="0.9"/><path d="M854.70,302.00 h5 M854.70,304.40 h5" stroke="#4a8fd4" stroke-width="0.7"/><text x="865.80" y="306.40" font-size="8.5" fill="#1b1b1b" font-weight="normal" text-anchor="start" letter-spacing="-0.25" stroke="#1b1b1b" stroke-width="0.2">fulltext</text><text transform="translate(852.70,319.60) scale(0.8,1)" font-size="8" fill="#3f8ad6" stroke="#3f8ad6" stroke-width="0.3">123</text><text x="865.80" y="319.90" font-size="8.5" fill="#1b1b1b" font-weight="normal" text-anchor="start" letter-spacing="-0.25" stroke="#1b1b1b" stroke-width="0.2">revenue_projection</text><rect x="849.60" y="114.50" width="97.80" height="210.00" fill="none" stroke="#1f93d6" stroke-width="1.7"/><rect x="702.50" y="181.80" width="76.00" height="75.00" fill="#fff"/><rect x="702.50" y="181.80" width="76.00" height="16.5" fill="#fdfddf"/><line x1="702.50" y1="198.60" x2="778.50" y2="198.60" stroke="#9fd0ef" stroke-width="1.1"/><line x1="702.50" y1="213.80" x2="778.50" y2="213.80" stroke="#9fd0ef" stroke-width="1.1"/><text x="730.68" y="193.20" font-size="8.5" fill="#1b1b1b" font-weight="normal" text-anchor="start" letter-spacing="-0.25" stroke="#1b1b1b" stroke-width="0.2">inventory</text><rect x="718.08" y="186.20" width="9.6" height="7.8" fill="#6aaee6"/><rect x="718.08" y="186.20" width="9.6" height="1.9" fill="#2f86d6"/><rect x="719.28" y="189.00" width="3.2" height="1.8" fill="#fff"/><rect x="723.38" y="189.00" width="3.2" height="1.8" fill="#fff"/><rect x="719.28" y="191.50" width="3.2" height="1.7" fill="#fff"/><rect x="723.38" y="191.50" width="3.2" height="1.7" fill="#fff"/><text transform="translate(705.60,209.20) scale(0.8,1)" font-size="8" fill="#3f8ad6" stroke="#3f8ad6" stroke-width="0.3">123</text><path d="M711.60,210.30 h2.5" stroke="#f08a24" stroke-width="0.9"/><circle cx="714.90" cy="210.30" r="0.9" fill="none" stroke="#f08a24" stroke-width="0.7"/><text x="718.70" y="209.50" font-size="8.5" fill="#1b1b1b" font-weight="bold" text-anchor="start" letter-spacing="-0.35" stroke="#1b1b1b" stroke-width="0.2">inventory_id</text><text transform="translate(705.60,224.90) scale(0.8,1)" font-size="8" fill="#3f8ad6" stroke="#3f8ad6" stroke-width="0.3">123</text><text x="718.70" y="225.20" font-size="8.5" fill="#1b1b1b" font-weight="normal" text-anchor="start" letter-spacing="-0.25" stroke="#1b1b1b" stroke-width="0.2">film_id</text><text transform="translate(705.60,238.40) scale(0.8,1)" font-size="8" fill="#3f8ad6" stroke="#3f8ad6" stroke-width="0.3">123</text><text x="718.70" y="238.70" font-size="8.5" fill="#1b1b1b" font-weight="normal" text-anchor="start" letter-spacing="-0.25" stroke="#1b1b1b" stroke-width="0.2">store_id</text><circle cx="710.10" cy="249.00" r="4" fill="none" stroke="#4a8fd4" stroke-width="0.9"/><path d="M711.10,246.50 L709.90,249.50 L708.20,251.00" fill="none" stroke="#4a8fd4" stroke-width="0.8"/><text x="718.70" y="252.20" font-size="8.5" fill="#1b1b1b" font-weight="normal" text-anchor="start" letter-spacing="-0.25" stroke="#1b1b1b" stroke-width="0.2">mod_ts</text><rect x="702.50" y="181.80" width="76.00" height="75.00" fill="none" stroke="#1f93d6" stroke-width="1.7"/><rect x="995.70" y="188.60" width="72.80" height="61.50" fill="#fff"/><rect x="995.70" y="188.60" width="72.80" height="16.5" fill="#fdfddf"/><line x1="995.70" y1="205.40" x2="1068.50" y2="205.40" stroke="#9fd0ef" stroke-width="1.1"/><line x1="995.70" y1="220.60" x2="1068.50" y2="220.60" stroke="#9fd0ef" stroke-width="1.1"/><text x="1021.91" y="200.00" font-size="8.5" fill="#1b1b1b" font-weight="normal" text-anchor="start" letter-spacing="-0.25" stroke="#1b1b1b" stroke-width="0.2">language</text><rect x="1009.31" y="193.00" width="9.6" height="7.8" fill="#6aaee6"/><rect x="1009.31" y="193.00" width="9.6" height="1.9" fill="#2f86d6"/><rect x="1010.51" y="195.80" width="3.2" height="1.8" fill="#fff"/><rect x="1014.61" y="195.80" width="3.2" height="1.8" fill="#fff"/><rect x="1010.51" y="198.30" width="3.2" height="1.7" fill="#fff"/><rect x="1014.61" y="198.30" width="3.2" height="1.7" fill="#fff"/><text transform="translate(998.80,216.00) scale(0.8,1)" font-size="8" fill="#3f8ad6" stroke="#3f8ad6" stroke-width="0.3">123</text><path d="M1004.80,217.10 h2.5" stroke="#f08a24" stroke-width="0.9"/><circle cx="1008.10" cy="217.10" r="0.9" fill="none" stroke="#f08a24" stroke-width="0.7"/><text x="1011.90" y="216.30" font-size="8.5" fill="#1b1b1b" font-weight="bold" text-anchor="start" letter-spacing="-0.35" stroke="#1b1b1b" stroke-width="0.2">language_id</text><text transform="translate(998.80,231.40) scale(0.85,1)" font-size="7" fill="#3d8ad0" font-weight="bold">A-Z</text><text x="1011.90" y="232.00" font-size="8.5" fill="#1b1b1b" font-weight="normal" text-anchor="start" letter-spacing="-0.25" stroke="#1b1b1b" stroke-width="0.2">name</text><circle cx="1003.30" cy="242.30" r="4" fill="none" stroke="#4a8fd4" stroke-width="0.9"/><path d="M1004.30,239.80 L1003.10,242.80 L1001.40,244.30" fill="none" stroke="#4a8fd4" stroke-width="0.8"/><text x="1011.90" y="245.50" font-size="8.5" fill="#1b1b1b" font-weight="normal" text-anchor="start" letter-spacing="-0.25" stroke="#1b1b1b" stroke-width="0.2">mod_ts</text><rect x="995.70" y="188.60" width="72.80" height="61.50" fill="none" stroke="#1f93d6" stroke-width="1.7"/><rect x="703.00" y="306.00" width="58.50" height="61.50" fill="#fff"/><rect x="703.00" y="306.00" width="58.50" height="16.5" fill="#fdfddf"/><line x1="703.00" y1="322.80" x2="761.50" y2="322.80" stroke="#9fd0ef" stroke-width="1.1"/><line x1="703.00" y1="351.50" x2="761.50" y2="351.50" stroke="#9fd0ef" stroke-width="1.1"/><text x="721.38" y="317.40" font-size="8.5" fill="#1b1b1b" font-weight="normal" text-anchor="start" letter-spacing="-0.25" stroke="#1b1b1b" stroke-width="0.2">film_actor</text><rect x="708.78" y="310.40" width="9.6" height="7.8" fill="#6aaee6"/><rect x="708.78" y="310.40" width="9.6" height="1.9" fill="#2f86d6"/><rect x="709.98" y="313.20" width="3.2" height="1.8" fill="#fff"/><rect x="714.08" y="313.20" width="3.2" height="1.8" fill="#fff"/><rect x="709.98" y="315.70" width="3.2" height="1.7" fill="#fff"/><rect x="714.08" y="315.70" width="3.2" height="1.7" fill="#fff"/><text transform="translate(706.10,333.40) scale(0.8,1)" font-size="8" fill="#3f8ad6" stroke="#3f8ad6" stroke-width="0.3">123</text><path d="M712.10,334.50 h2.5" stroke="#f08a24" stroke-width="0.9"/><circle cx="715.40" cy="334.50" r="0.9" fill="none" stroke="#f08a24" stroke-width="0.7"/><text x="719.20" y="333.70" font-size="8.5" fill="#1b1b1b" font-weight="bold" text-anchor="start" letter-spacing="-0.35" stroke="#1b1b1b" stroke-width="0.2">actor_id</text><text transform="translate(706.10,346.90) scale(0.8,1)" font-size="8" fill="#3f8ad6" stroke="#3f8ad6" stroke-width="0.3">123</text><path d="M712.10,348.00 h2.5" stroke="#f08a24" stroke-width="0.9"/><circle cx="715.40" cy="348.00" r="0.9" fill="none" stroke="#f08a24" stroke-width="0.7"/><text x="719.20" y="347.20" font-size="8.5" fill="#1b1b1b" font-weight="bold" text-anchor="start" letter-spacing="-0.35" stroke="#1b1b1b" stroke-width="0.2">film_id</text><circle cx="710.60" cy="359.70" r="4" fill="none" stroke="#4a8fd4" stroke-width="0.9"/><path d="M711.60,357.20 L710.40,360.20 L708.70,361.70" fill="none" stroke="#4a8fd4" stroke-width="0.8"/><text x="719.20" y="362.90" font-size="8.5" fill="#1b1b1b" font-weight="normal" text-anchor="start" letter-spacing="-0.25" stroke="#1b1b1b" stroke-width="0.2">mod_ts</text><rect x="703.00" y="306.00" width="58.50" height="61.50" fill="none" stroke="#1f93d6" stroke-width="1.7"/><rect x="850.30" y="373.40" width="65.70" height="75.00" fill="#fff"/><rect x="850.30" y="373.40" width="65.70" height="16.5" fill="#fdfddf"/><line x1="850.30" y1="390.20" x2="916.00" y2="390.20" stroke="#9fd0ef" stroke-width="1.1"/><line x1="850.30" y1="405.40" x2="916.00" y2="405.40" stroke="#9fd0ef" stroke-width="1.1"/><text x="880.63" y="384.80" font-size="8.5" fill="#1b1b1b" font-weight="normal" text-anchor="start" letter-spacing="-0.25" stroke="#1b1b1b" stroke-width="0.2">actor</text><rect x="868.03" y="377.80" width="9.6" height="7.8" fill="#6aaee6"/><rect x="868.03" y="377.80" width="9.6" height="1.9" fill="#2f86d6"/><rect x="869.23" y="380.60" width="3.2" height="1.8" fill="#fff"/><rect x="873.33" y="380.60" width="3.2" height="1.8" fill="#fff"/><rect x="869.23" y="383.10" width="3.2" height="1.7" fill="#fff"/><rect x="873.33" y="383.10" width="3.2" height="1.7" fill="#fff"/><text transform="translate(853.40,400.80) scale(0.8,1)" font-size="8" fill="#3f8ad6" stroke="#3f8ad6" stroke-width="0.3">123</text><path d="M859.40,401.90 h2.5" stroke="#f08a24" stroke-width="0.9"/><circle cx="862.70" cy="401.90" r="0.9" fill="none" stroke="#f08a24" stroke-width="0.7"/><text x="866.50" y="401.10" font-size="8.5" fill="#1b1b1b" font-weight="bold" text-anchor="start" letter-spacing="-0.35" stroke="#1b1b1b" stroke-width="0.2">actor_id</text><text transform="translate(853.40,416.20) scale(0.85,1)" font-size="7" fill="#3d8ad0" font-weight="bold">A-Z</text><text x="866.50" y="416.80" font-size="8.5" fill="#1b1b1b" font-weight="normal" text-anchor="start" letter-spacing="-0.25" stroke="#1b1b1b" stroke-width="0.2">first_name</text><text transform="translate(853.40,429.70) scale(0.85,1)" font-size="7" fill="#3d8ad0" font-weight="bold">A-Z</text><text x="866.50" y="430.30" font-size="8.5" fill="#1b1b1b" font-weight="normal" text-anchor="start" letter-spacing="-0.25" stroke="#1b1b1b" stroke-width="0.2">last_name</text><circle cx="857.90" cy="440.60" r="4" fill="none" stroke="#4a8fd4" stroke-width="0.9"/><path d="M858.90,438.10 L857.70,441.10 L856.00,442.60" fill="none" stroke="#4a8fd4" stroke-width="0.8"/><text x="866.50" y="443.80" font-size="8.5" fill="#1b1b1b" font-weight="normal" text-anchor="start" letter-spacing="-0.25" stroke="#1b1b1b" stroke-width="0.2">mod_ts</text><rect x="850.30" y="373.40" width="65.70" height="75.00" fill="none" stroke="#1f93d6" stroke-width="1.7"/><rect x="703.00" y="416.50" width="72.00" height="61.50" fill="#fff"/><rect x="703.00" y="416.50" width="72.00" height="16.5" fill="#fdfddf"/><line x1="703.00" y1="433.30" x2="775.00" y2="433.30" stroke="#9fd0ef" stroke-width="1.1"/><line x1="703.00" y1="462.00" x2="775.00" y2="462.00" stroke="#9fd0ef" stroke-width="1.1"/><text x="721.65" y="427.90" font-size="8.5" fill="#1b1b1b" font-weight="normal" text-anchor="start" letter-spacing="-0.25" stroke="#1b1b1b" stroke-width="0.2">film_category</text><rect x="709.05" y="420.90" width="9.6" height="7.8" fill="#6aaee6"/><rect x="709.05" y="420.90" width="9.6" height="1.9" fill="#2f86d6"/><rect x="710.25" y="423.70" width="3.2" height="1.8" fill="#fff"/><rect x="714.35" y="423.70" width="3.2" height="1.8" fill="#fff"/><rect x="710.25" y="426.20" width="3.2" height="1.7" fill="#fff"/><rect x="714.35" y="426.20" width="3.2" height="1.7" fill="#fff"/><text transform="translate(706.10,443.90) scale(0.8,1)" font-size="8" fill="#3f8ad6" stroke="#3f8ad6" stroke-width="0.3">123</text><path d="M712.10,445.00 h2.5" stroke="#f08a24" stroke-width="0.9"/><circle cx="715.40" cy="445.00" r="0.9" fill="none" stroke="#f08a24" stroke-width="0.7"/><text x="719.20" y="444.20" font-size="8.5" fill="#1b1b1b" font-weight="bold" text-anchor="start" letter-spacing="-0.35" stroke="#1b1b1b" stroke-width="0.2">film_id</text><text transform="translate(706.10,457.40) scale(0.8,1)" font-size="8" fill="#3f8ad6" stroke="#3f8ad6" stroke-width="0.3">123</text><path d="M712.10,458.50 h2.5" stroke="#f08a24" stroke-width="0.9"/><circle cx="715.40" cy="458.50" r="0.9" fill="none" stroke="#f08a24" stroke-width="0.7"/><text x="719.20" y="457.70" font-size="8.5" fill="#1b1b1b" font-weight="bold" text-anchor="start" letter-spacing="-0.35" stroke="#1b1b1b" stroke-width="0.2">category_id</text><circle cx="710.60" cy="470.20" r="4" fill="none" stroke="#4a8fd4" stroke-width="0.9"/><path d="M711.60,467.70 L710.40,470.70 L708.70,472.20" fill="none" stroke="#4a8fd4" stroke-width="0.8"/><text x="719.20" y="473.40" font-size="8.5" fill="#1b1b1b" font-weight="normal" text-anchor="start" letter-spacing="-0.25" stroke="#1b1b1b" stroke-width="0.2">mod_ts</text><rect x="703.00" y="416.50" width="72.00" height="61.50" fill="none" stroke="#1f93d6" stroke-width="1.7"/><rect x="850.30" y="497.20" width="72.20" height="61.50" fill="#fff"/><rect x="850.30" y="497.20" width="72.20" height="16.5" fill="#fdfddf"/><line x1="850.30" y1="514.00" x2="922.50" y2="514.00" stroke="#9fd0ef" stroke-width="1.1"/><line x1="850.30" y1="529.20" x2="922.50" y2="529.20" stroke="#9fd0ef" stroke-width="1.1"/><text x="877.40" y="508.60" font-size="8.5" fill="#1b1b1b" font-weight="normal" text-anchor="start" letter-spacing="-0.25" stroke="#1b1b1b" stroke-width="0.2">category</text><rect x="864.80" y="501.60" width="9.6" height="7.8" fill="#6aaee6"/><rect x="864.80" y="501.60" width="9.6" height="1.9" fill="#2f86d6"/><rect x="866.00" y="504.40" width="3.2" height="1.8" fill="#fff"/><rect x="870.10" y="504.40" width="3.2" height="1.8" fill="#fff"/><rect x="866.00" y="506.90" width="3.2" height="1.7" fill="#fff"/><rect x="870.10" y="506.90" width="3.2" height="1.7" fill="#fff"/><text transform="translate(853.40,524.60) scale(0.8,1)" font-size="8" fill="#3f8ad6" stroke="#3f8ad6" stroke-width="0.3">123</text><path d="M859.40,525.70 h2.5" stroke="#f08a24" stroke-width="0.9"/><circle cx="862.70" cy="525.70" r="0.9" fill="none" stroke="#f08a24" stroke-width="0.7"/><text x="866.50" y="524.90" font-size="8.5" fill="#1b1b1b" font-weight="bold" text-anchor="start" letter-spacing="-0.35" stroke="#1b1b1b" stroke-width="0.2">category_id</text><text transform="translate(853.40,540.00) scale(0.85,1)" font-size="7" fill="#3d8ad0" font-weight="bold">A-Z</text><text x="866.50" y="540.60" font-size="8.5" fill="#1b1b1b" font-weight="normal" text-anchor="start" letter-spacing="-0.25" stroke="#1b1b1b" stroke-width="0.2">name</text><circle cx="857.90" cy="550.90" r="4" fill="none" stroke="#4a8fd4" stroke-width="0.9"/><path d="M858.90,548.40 L857.70,551.40 L856.00,552.90" fill="none" stroke="#4a8fd4" stroke-width="0.8"/><text x="866.50" y="554.10" font-size="8.5" fill="#1b1b1b" font-weight="normal" text-anchor="start" letter-spacing="-0.25" stroke="#1b1b1b" stroke-width="0.2">mod_ts</text><rect x="850.30" y="497.20" width="72.20" height="61.50" fill="none" stroke="#1f93d6" stroke-width="1.7"/><rect x="702.70" y="527.00" width="75.00" height="142.50" fill="#fff"/><rect x="702.70" y="527.00" width="75.00" height="16.5" fill="#fdfddf"/><line x1="702.70" y1="543.80" x2="777.70" y2="543.80" stroke="#9fd0ef" stroke-width="1.1"/><line x1="702.70" y1="559.00" x2="777.70" y2="559.00" stroke="#9fd0ef" stroke-width="1.1"/><text x="730.02" y="538.40" font-size="8.5" fill="#1b1b1b" font-weight="normal" text-anchor="start" letter-spacing="-0.25" stroke="#1b1b1b" stroke-width="0.2">customer</text><rect x="717.42" y="531.40" width="9.6" height="7.8" fill="#6aaee6"/><rect x="717.42" y="531.40" width="9.6" height="1.9" fill="#2f86d6"/><rect x="718.62" y="534.20" width="3.2" height="1.8" fill="#fff"/><rect x="722.72" y="534.20" width="3.2" height="1.8" fill="#fff"/><rect x="718.62" y="536.70" width="3.2" height="1.7" fill="#fff"/><rect x="722.72" y="536.70" width="3.2" height="1.7" fill="#fff"/><text transform="translate(705.80,554.40) scale(0.8,1)" font-size="8" fill="#3f8ad6" stroke="#3f8ad6" stroke-width="0.3">123</text><path d="M711.80,555.50 h2.5" stroke="#f08a24" stroke-width="0.9"/><circle cx="715.10" cy="555.50" r="0.9" fill="none" stroke="#f08a24" stroke-width="0.7"/><text x="718.90" y="554.70" font-size="8.5" fill="#1b1b1b" font-weight="bold" text-anchor="start" letter-spacing="-0.35" stroke="#1b1b1b" stroke-width="0.2">customer_id</text><text transform="translate(705.80,570.10) scale(0.8,1)" font-size="8" fill="#3f8ad6" stroke="#3f8ad6" stroke-width="0.3">123</text><text x="718.90" y="570.40" font-size="8.5" fill="#1b1b1b" font-weight="normal" text-anchor="start" letter-spacing="-0.25" stroke="#1b1b1b" stroke-width="0.2">store_id</text><text transform="translate(705.80,583.30) scale(0.85,1)" font-size="7" fill="#3d8ad0" font-weight="bold">A-Z</text><text x="718.90" y="583.90" font-size="8.5" fill="#1b1b1b" font-weight="normal" text-anchor="start" letter-spacing="-0.25" stroke="#1b1b1b" stroke-width="0.2">first_name</text><text transform="translate(705.80,596.80) scale(0.85,1)" font-size="7" fill="#3d8ad0" font-weight="bold">A-Z</text><text x="718.90" y="597.40" font-size="8.5" fill="#1b1b1b" font-weight="normal" text-anchor="start" letter-spacing="-0.25" stroke="#1b1b1b" stroke-width="0.2">last_name</text><text transform="translate(705.80,610.30) scale(0.85,1)" font-size="7" fill="#3d8ad0" font-weight="bold">A-Z</text><text x="718.90" y="610.90" font-size="8.5" fill="#1b1b1b" font-weight="normal" text-anchor="start" letter-spacing="-0.25" stroke="#1b1b1b" stroke-width="0.2">email</text><text transform="translate(705.80,624.10) scale(0.8,1)" font-size="8" fill="#3f8ad6" stroke="#3f8ad6" stroke-width="0.3">123</text><text x="718.90" y="624.40" font-size="8.5" fill="#1b1b1b" font-weight="normal" text-anchor="start" letter-spacing="-0.25" stroke="#1b1b1b" stroke-width="0.2">address_id</text><rect x="706.30" y="630.70" width="8" height="8" fill="none" stroke="#4a8fd4" stroke-width="0.9"/><path d="M707.80,634.70 L709.60,636.70 L713.10,632.10" fill="none" stroke="#4a8fd4" stroke-width="0.9"/><text x="718.90" y="637.90" font-size="8.5" fill="#1b1b1b" font-weight="normal" text-anchor="start" letter-spacing="-0.25" stroke="#1b1b1b" stroke-width="0.2">is_active</text><circle cx="710.30" cy="648.20" r="4" fill="none" stroke="#4a8fd4" stroke-width="0.9"/><path d="M711.30,645.70 L710.10,648.70 L708.40,650.20" fill="none" stroke="#4a8fd4" stroke-width="0.8"/><text x="718.90" y="651.40" font-size="8.5" fill="#1b1b1b" font-weight="normal" text-anchor="start" letter-spacing="-0.25" stroke="#1b1b1b" stroke-width="0.2">crt_ts</text><circle cx="710.30" cy="661.70" r="4" fill="none" stroke="#4a8fd4" stroke-width="0.9"/><path d="M711.30,659.20 L710.10,662.20 L708.40,663.70" fill="none" stroke="#4a8fd4" stroke-width="0.8"/><text x="718.90" y="664.90" font-size="8.5" fill="#1b1b1b" font-weight="normal" text-anchor="start" letter-spacing="-0.25" stroke="#1b1b1b" stroke-width="0.2">last_update</text><rect x="702.70" y="527.00" width="75.00" height="142.50" fill="none" stroke="#1f93d6" stroke-width="1.7"/><rect x="546.00" y="533.60" width="75.40" height="142.50" fill="#fff"/><rect x="546.00" y="533.60" width="75.40" height="16.5" fill="#fdfddf"/><line x1="546.00" y1="550.40" x2="621.40" y2="550.40" stroke="#9fd0ef" stroke-width="1.1"/><line x1="546.00" y1="565.60" x2="621.40" y2="565.60" stroke="#9fd0ef" stroke-width="1.1"/><text x="580.12" y="545.00" font-size="8.5" fill="#1b1b1b" font-weight="normal" text-anchor="start" letter-spacing="-0.25" stroke="#1b1b1b" stroke-width="0.2">rental</text><rect x="567.52" y="538.00" width="9.6" height="7.8" fill="#6aaee6"/><rect x="567.52" y="538.00" width="9.6" height="1.9" fill="#2f86d6"/><rect x="568.72" y="540.80" width="3.2" height="1.8" fill="#fff"/><rect x="572.82" y="540.80" width="3.2" height="1.8" fill="#fff"/><rect x="568.72" y="543.30" width="3.2" height="1.7" fill="#fff"/><rect x="572.82" y="543.30" width="3.2" height="1.7" fill="#fff"/><text transform="translate(549.10,561.00) scale(0.8,1)" font-size="8" fill="#3f8ad6" stroke="#3f8ad6" stroke-width="0.3">123</text><path d="M555.10,562.10 h2.5" stroke="#f08a24" stroke-width="0.9"/><circle cx="558.40" cy="562.10" r="0.9" fill="none" stroke="#f08a24" stroke-width="0.7"/><text x="562.20" y="561.30" font-size="8.5" fill="#1b1b1b" font-weight="bold" text-anchor="start" letter-spacing="-0.35" stroke="#1b1b1b" stroke-width="0.2">rental_id</text><circle cx="553.60" cy="573.80" r="4" fill="none" stroke="#4a8fd4" stroke-width="0.9"/><path d="M554.60,571.30 L553.40,574.30 L551.70,575.80" fill="none" stroke="#4a8fd4" stroke-width="0.8"/><text x="562.20" y="577.00" font-size="8.5" fill="#1b1b1b" font-weight="normal" text-anchor="start" letter-spacing="-0.25" stroke="#1b1b1b" stroke-width="0.2">rental_date</text><text transform="translate(549.10,590.20) scale(0.8,1)" font-size="8" fill="#3f8ad6" stroke="#3f8ad6" stroke-width="0.3">123</text><text x="562.20" y="590.50" font-size="8.5" fill="#1b1b1b" font-weight="normal" text-anchor="start" letter-spacing="-0.25" stroke="#1b1b1b" stroke-width="0.2">inventory_id</text><text transform="translate(549.10,603.70) scale(0.8,1)" font-size="8" fill="#3f8ad6" stroke="#3f8ad6" stroke-width="0.3">123</text><text x="562.20" y="604.00" font-size="8.5" fill="#1b1b1b" font-weight="normal" text-anchor="start" letter-spacing="-0.25" stroke="#1b1b1b" stroke-width="0.2">customer_id</text><circle cx="553.60" cy="614.30" r="4" fill="none" stroke="#4a8fd4" stroke-width="0.9"/><path d="M554.60,611.80 L553.40,614.80 L551.70,616.30" fill="none" stroke="#4a8fd4" stroke-width="0.8"/><text x="562.20" y="617.50" font-size="8.5" fill="#1b1b1b" font-weight="normal" text-anchor="start" letter-spacing="-0.25" stroke="#1b1b1b" stroke-width="0.2">return_date</text><text transform="translate(549.10,630.70) scale(0.8,1)" font-size="8" fill="#3f8ad6" stroke="#3f8ad6" stroke-width="0.3">123</text><text x="562.20" y="631.00" font-size="8.5" fill="#1b1b1b" font-weight="normal" text-anchor="start" letter-spacing="-0.25" stroke="#1b1b1b" stroke-width="0.2">staff_id</text><circle cx="553.60" cy="641.30" r="4" fill="none" stroke="#4a8fd4" stroke-width="0.9"/><path d="M554.60,638.80 L553.40,641.80 L551.70,643.30" fill="none" stroke="#4a8fd4" stroke-width="0.8"/><text x="562.20" y="644.50" font-size="8.5" fill="#1b1b1b" font-weight="normal" text-anchor="start" letter-spacing="-0.25" stroke="#1b1b1b" stroke-width="0.2">mod_ts</text><rect x="549.60" y="650.80" width="8" height="8" fill="none" stroke="#4a8fd4" stroke-width="0.9"/><path d="M551.10,653.60 h5 M551.10,656.00 h5" stroke="#4a8fd4" stroke-width="0.7"/><text x="562.20" y="658.00" font-size="8.5" fill="#1b1b1b" font-weight="normal" text-anchor="start" letter-spacing="-0.25" stroke="#1b1b1b" stroke-width="0.2">rental_period</text><circle cx="553.60" cy="668.30" r="4" fill="none" stroke="#4a8fd4" stroke-width="0.9"/><path d="M554.60,665.80 L553.40,668.80 L551.70,670.30" fill="none" stroke="#4a8fd4" stroke-width="0.8"/><text x="562.20" y="671.50" font-size="8.5" fill="#1b1b1b" font-weight="normal" text-anchor="start" letter-spacing="-0.25" stroke="#1b1b1b" stroke-width="0.2">x</text><rect x="546.00" y="533.60" width="75.40" height="142.50" fill="none" stroke="#1f93d6" stroke-width="1.7"/><rect x="418.00" y="639.20" width="79.50" height="61.50" fill="#fff"/><rect x="418.00" y="639.20" width="79.50" height="16.5" fill="#fdfddf"/><line x1="418.00" y1="656.00" x2="497.50" y2="656.00" stroke="#9fd0ef" stroke-width="1.1"/><line x1="418.00" y1="671.20" x2="497.50" y2="671.20" stroke="#9fd0ef" stroke-width="1.1"/><text x="448.63" y="650.60" font-size="8.5" fill="#1b1b1b" font-weight="normal" text-anchor="start" letter-spacing="-0.25" stroke="#1b1b1b" stroke-width="0.2">payment</text><rect x="436.03" y="643.60" width="9.6" height="7.8" fill="#6aaee6"/><rect x="436.03" y="643.60" width="9.6" height="1.9" fill="#2f86d6"/><rect x="437.23" y="646.40" width="3.2" height="1.8" fill="#fff"/><rect x="441.33" y="646.40" width="3.2" height="1.8" fill="#fff"/><rect x="437.23" y="648.90" width="3.2" height="1.7" fill="#fff"/><rect x="441.33" y="648.90" width="3.2" height="1.7" fill="#fff"/><text transform="translate(421.10,666.60) scale(0.8,1)" font-size="8" fill="#3f8ad6" stroke="#3f8ad6" stroke-width="0.3">123</text><path d="M427.10,667.70 h2.5" stroke="#f08a24" stroke-width="0.9"/><circle cx="430.40" cy="667.70" r="0.9" fill="none" stroke="#f08a24" stroke-width="0.7"/><text x="434.20" y="666.90" font-size="8.5" fill="#1b1b1b" font-weight="bold" text-anchor="start" letter-spacing="-0.35" stroke="#1b1b1b" stroke-width="0.2">payment_id</text><text transform="translate(421.10,682.30) scale(0.8,1)" font-size="8" fill="#3f8ad6" stroke="#3f8ad6" stroke-width="0.3">123</text><text x="434.20" y="682.60" font-size="8.5" fill="#1b1b1b" font-weight="normal" text-anchor="start" letter-spacing="-0.25" stroke="#1b1b1b" stroke-width="0.2">a</text><text transform="translate(421.10,695.80) scale(0.8,1)" font-size="8" fill="#3f8ad6" stroke="#3f8ad6" stroke-width="0.3">123</text><text x="434.20" y="696.10" font-size="8.5" fill="#1b1b1b" font-weight="normal" text-anchor="start" letter-spacing="-0.25" stroke="#1b1b1b" stroke-width="0.2">b</text><rect x="418.00" y="639.20" width="79.50" height="61.50" fill="none" stroke="#1f93d6" stroke-width="1.7"/></g></svg>
<div style="position:absolute;left:390px;top:657px;width:902px;height:18px;background:#ececec;border-top:1px solid #c8c8c8;box-sizing:border-box;"></div>
<svg style="position:absolute;left:395.5px;top:661.5px;" width="11" height="11" viewBox="0 0 11 11"><path d="M5.5 0.8 L10.2 5.5 L5.5 10.2 L0.8 5.5 Z" fill="none" stroke="#1a86d8" stroke-width="1.3"/><path d="M3 4 Q5.5 1.5 8 4 M3 7 Q5.5 9.5 8 7" fill="none" stroke="#1a86d8" stroke-width="1"/></svg>
<div class="t" style="left:409px;top:660.50px;line-height:12px;font-size:8.5px;color:#222;letter-spacing:-0.25px;">Refresh</div>
<svg style="position:absolute;left:443.5px;top:661.5px;" width="10" height="10" viewBox="0 0 10 10"><path d="M0.5 0.5 H8 L9.5 2 V9.5 H0.5 Z" fill="#a9a9a9"/><rect x="2.5" y="0.8" width="4.5" height="3" fill="#ddd"/></svg>
<div class="t" style="left:457px;top:660.50px;line-height:12px;font-size:8.5px;color:#a8a8a8;letter-spacing:-0.25px;">Save ...</div>
<svg style="position:absolute;left:488.5px;top:661.5px;" width="10" height="11" viewBox="0 0 10 11"><path d="M0.5 0.5 H6 L8.5 3 V10.5 H0.5 Z" fill="none" stroke="#aaa" stroke-width="0.9"/><path d="M5 7 L8.5 10.5 M8.5 7 L5 10.5" stroke="#999" stroke-width="0.8"/></svg>
<div class="t" style="left:501px;top:660.50px;line-height:12px;font-size:8.5px;color:#a8a8a8;letter-spacing:-0.25px;">Revert</div>
<div style="position:absolute;left:531px;top:660px;width:1px;height:13px;background:#b0b0b0;"></div>
<svg style="position:absolute;left:536px;top:661.0px;" width="11" height="11" viewBox="0 0 11 11"><path d="M1.3 9.7 L1.8 7 L8 0.8 L10.2 3 L4 9.2 Z" fill="#2a8ad8"/></svg>
<div class="t" style="left:550px;top:660.50px;line-height:12px;font-size:8.5px;color:#222;letter-spacing:-0.25px;">Edit Mode</div>
<div style="position:absolute;left:592px;top:659.3px;width:62.5px;height:14.6px;background:#d3e8f8;border:1px solid #b0d4f1;border-radius:1.5px;box-sizing:border-box;"></div>
<svg style="position:absolute;left:595.5px;top:661.5px;" width="10" height="10" viewBox="0 0 10 10"><rect x="0.5" y="0.5" width="9" height="9" fill="none" stroke="#1a70c0" stroke-width="0.9" stroke-dasharray="2 1"/><rect x="2" y="2" width="6" height="6" fill="#1a70c0"/><rect x="3" y="2" width="4" height="2" fill="#cfe5f7"/></svg>
<div class="t" style="left:608px;top:660.50px;line-height:12px;font-size:8.5px;color:#222;letter-spacing:-0.25px;">Keep layout</div>
<div style="position:absolute;left:656px;top:660px;width:1px;height:13px;background:#b0b0b0;"></div>
<div style="position:absolute;left:659.5px;top:659px;width:45px;height:16px;background:#fff;border:1px solid #bdbdbd;box-sizing:border-box;"></div>
<div class="t" style="left:664px;top:660.50px;line-height:12px;font-size:8.5px;color:#222;letter-spacing:-0.25px;">100%</div>
<svg style="position:absolute;left:695px;top:664.5px;" width="7" height="4" viewBox="0 0 7 4"><path d="M0.5 0.5 L3.5 3.5 L6.5 0.5" fill="none" stroke="#555" stroke-width="0.9"/></svg>
<svg style="position:absolute;left:707px;top:661.5px;" width="10" height="10" viewBox="0 0 10 10"><circle cx="4.3" cy="4.3" r="3.5" fill="none" stroke="#1a86d8" stroke-width="1.2"/><path d="M6.8 6.8 L9.5 9.5" stroke="#1a86d8" stroke-width="1.6"/><path d="M2.4 4.3 H6.2 M4.3 2.4 V6.2" stroke="#1a86d8" stroke-width="0.9"/></svg>
<svg style="position:absolute;left:723.5px;top:661.5px;" width="10" height="10" viewBox="0 0 10 10"><circle cx="4.3" cy="4.3" r="3.5" fill="none" stroke="#1a86d8" stroke-width="1.2"/><path d="M6.8 6.8 L9.5 9.5" stroke="#1a86d8" stroke-width="1.6"/><path d="M2.4 4.3 H6.2" stroke="#1a86d8" stroke-width="0.9"/></svg>
<div style="position:absolute;left:739px;top:660px;width:1px;height:13px;background:#b0b0b0;"></div>
<svg style="position:absolute;left:744px;top:661.5px;" width="11" height="10" viewBox="0 0 11 10"><rect x="0.5" y="0.5" width="4" height="3.5" fill="none" stroke="#6a9fd0" stroke-width="0.8"/><rect x="6" y="3" width="4" height="3" fill="none" stroke="#999" stroke-width="0.8"/><rect x="2" y="6.5" width="4" height="3" fill="none" stroke="#999" stroke-width="0.8"/></svg>
<svg style="position:absolute;left:760px;top:661.5px;" width="11" height="10" viewBox="0 0 11 10"><path d="M0.5 2.5 H10.5 M0.5 5 H10.5 M0.5 7.5 H10.5 M2.5 0.5 V9.5 M5.5 0.5 V9.5 M8.5 0.5 V9.5" stroke="#7f9fc0" stroke-width="0.9"/></svg>
<svg style="position:absolute;left:777px;top:661.5px;" width="11" height="11" viewBox="0 0 11 11"><path d="M5.5 0.5 L10.5 5.5 L5.5 10.5 L0.5 5.5 Z" fill="none" stroke="#8a8a8a" stroke-width="0.9"/><path d="M5.5 2.5 V8.5 M2.5 5.5 H8.5" stroke="#8a8a8a" stroke-width="0.8"/><circle cx="5.5" cy="5.5" r="1.3" fill="#c8a060"/></svg>
<div style="position:absolute;left:792px;top:660px;width:1px;height:13px;background:#b0b0b0;"></div>
<svg style="position:absolute;left:798px;top:661.5px;" width="11" height="10" viewBox="0 0 11 10"><rect x="0.5" y="0.5" width="9" height="8.5" fill="none" stroke="#2a8ad8" stroke-width="0.9"/><path d="M2.5 3 H7.5 M2.5 5 H7.5" stroke="#2a8ad8" stroke-width="0.8"/><circle cx="8.5" cy="8" r="1.8" fill="#2a8ad8"/></svg>
<svg style="position:absolute;left:814px;top:661.5px;" width="10" height="10" viewBox="0 0 10 10"><rect x="0.5" y="0.5" width="3.5" height="3" fill="none" stroke="#2a8ad8" stroke-width="0.8"/><rect x="0.5" y="6.5" width="3.5" height="3" fill="none" stroke="#2a8ad8" stroke-width="0.8"/><path d="M4 2 H9.5 M4 8 H9.5 M6 4.5 H9.5" stroke="#2a8ad8" stroke-width="0.9"/></svg>
<div style="position:absolute;left:830px;top:660px;width:1px;height:13px;background:#b0b0b0;"></div>
<svg style="position:absolute;left:835.5px;top:661.5px;" width="11" height="10" viewBox="0 0 11 10"><rect x="2.5" y="0.5" width="6" height="3" fill="#1a70c0"/><rect x="0.5" y="3.5" width="10" height="4.5" rx="1" fill="#1a86d8"/><rect x="2.5" y="7" width="6" height="2.5" fill="#1a70c0"/></svg>
<svg style="position:absolute;left:851.5px;top:661.5px;" width="12" height="10" viewBox="0 0 12 10"><rect x="0.5" y="0.5" width="10" height="8.5" fill="none" stroke="#2a8ad8" stroke-width="1"/><path d="M2 7.5 L4.5 4.5 L6.5 6.5" fill="none" stroke="#2a8ad8" stroke-width="0.8"/><circle cx="9.5" cy="8" r="2.2" fill="#2aa84a"/></svg>
<div style="position:absolute;left:868px;top:660px;width:1px;height:13px;background:#b0b0b0;"></div>
<svg style="position:absolute;left:874px;top:661.0px;" width="11" height="11" viewBox="0 0 11 11"><path d="M5.50 0.30 L6.51 0.40 L6.95 1.99 L7.61 2.34 L9.18 1.82 L9.82 2.61 L9.01 4.05 L9.23 4.76 L10.70 5.50 L10.60 6.51 L9.01 6.95 L8.66 7.61 L9.18 9.18 L8.39 9.82 L6.95 9.01 L6.24 9.23 L5.50 10.70 L4.49 10.60 L4.05 9.01 L3.39 8.66 L1.82 9.18 L1.18 8.39 L1.99 6.95 L1.77 6.24 L0.30 5.50 L0.40 4.49 L1.99 4.05 L2.34 3.39 L1.82 1.82 L2.61 1.18 L4.05 1.99 L4.76 1.77 Z" fill="#1a86d8"/><circle cx="5.5" cy="5.5" r="1.6" fill="#a8d6f7"/></svg>
<div style="position:absolute;left:894px;top:660px;width:1px;height:13px;background:repeating-linear-gradient(#a8a098 0 1px, transparent 1px 2.5px);"></div>
<div class="t" style="left:899px;top:660.50px;line-height:12px;font-size:8.5px;color:#222;letter-spacing:-0.25px;">24 objects</div>
<svg style="position:absolute;left:1275px;top:661.5px;" width="11" height="11" viewBox="0 0 11 11"><circle cx="4.3" cy="4.3" r="3.3" fill="none" stroke="#1a86d8" stroke-width="1.5"/><path d="M6.6 6.6 L9.8 9.8" stroke="#1a86d8" stroke-width="2"/></svg>
<div style="position:absolute;left:0px;top:675px;width:1292px;height:18px;background:#f0f0f0;"></div>
<div style="position:absolute;left:1059.5px;top:677px;width:1px;height:14px;background:#b8b8b8;"></div>
<div class="t" style="left:1064.8px;top:677.60px;line-height:12px;font-size:8.5px;color:#222;letter-spacing:-0.5px;">MST</div>
<div style="position:absolute;left:1085px;top:677px;width:1px;height:14px;background:#b8b8b8;"></div>
<div class="t" style="left:1089px;top:677.50px;line-height:12px;font-size:8.5px;color:#222;letter-spacing:-0.25px;">en</div>
<div style="position:absolute;left:1102px;top:678px;width:1px;height:12px;background:repeating-linear-gradient(#a8a098 0 1px, transparent 1px 2.5px);"></div>
<div style="position:absolute;left:0px;top:692.5px;width:1292px;height:1px;background:#f7f7f7;"></div>
<div style="position:absolute;left:0px;top:693.5px;width:1292px;height:32.5px;background:#1c1c1c;"></div>
<svg style="position:absolute;left:11px;top:700px;" width="22" height="20" viewBox="0 0 22 20"><path d="M2 8.5 H10 M2 11 H14 Q17 11 16.5 13.5" fill="none" stroke="#8fbbe6" stroke-width="1.3"/><path d="M9 6 Q12 5 12 8.5" fill="none" stroke="#8fbbe6" stroke-width="1.2"/></svg>
<svg style="position:absolute;left:19px;top:699px;" width="12" height="12" viewBox="0 0 12 12"><circle cx="6" cy="6" r="5.3" fill="#d93b2b"/><text x="6" y="8.8" font-size="7.5" fill="#fff" text-anchor="middle" font-family="Liberation Sans, sans-serif">7</text></svg>
<div class="t" style="left:34px;top:699.50px;line-height:10px;font-size:8.3px;color:#f2f2f2;letter-spacing:-0.1px;">56°F</div>
<div class="t" style="left:34px;top:710.20px;line-height:10px;font-size:8.3px;color:#e6e6e6;letter-spacing:-0.1px;">Windy</div>
<svg style="position:absolute;left:297px;top:701px;" width="17" height="17" viewBox="0 0 17 17"><defs><linearGradient id="wg" x1="0" y1="0" x2="1" y2="1"><stop offset="0" stop-color="#2ec6f5"/><stop offset="1" stop-color="#1a8fe0"/></linearGradient></defs><rect x="0.5" y="0.5" width="7.6" height="7.6" fill="url(#wg)"/><rect x="8.9" y="0.5" width="7.6" height="7.6" fill="url(#wg)"/><rect x="0.5" y="8.9" width="7.6" height="7.6" fill="url(#wg)"/><rect x="8.9" y="8.9" width="7.6" height="7.6" fill="url(#wg)"/></svg>
<div style="position:absolute;left:322px;top:699.3px;width:146px;height:20.7px;background:#f3f3f3;border-radius:11px;"></div>
<svg style="position:absolute;left:330px;top:704.5px;" width="10" height="10" viewBox="0 0 10 10"><circle cx="4.2" cy="4.2" r="3.4" fill="none" stroke="#222" stroke-width="1.1"/><path d="M6.6 6.6 L9.3 9.3" stroke="#222" stroke-width="1.2"/></svg>
<div class="t" style="left:346px;top:702.50px;line-height:14px;font-size:9px;color:#5a5a5a;letter-spacing:0px;">Search</div>
<div style="position:absolute;left:432.5px;top:700.7px;width:34.5px;height:17.8px;background:#0f3e91;border-radius:9px;border:1px solid #6a8fd0;box-sizing:border-box;"></div>
<div class="t" style="left:432.5px;top:704.50px;line-height:10px;font-size:5.6px;color:#fff;letter-spacing:0px;font-weight:bold;width:34.5px;text-align:center;">upbound</div>
<svg style="position:absolute;left:477px;top:701px;" width="18" height="17" viewBox="0 0 18 17"><rect x="4" y="1" width="12" height="11" fill="#d8d8d8"/><rect x="1" y="5" width="10" height="11" fill="#8a8a8a" opacity="0.8"/></svg>
<svg style="position:absolute;left:507px;top:701px;" width="18" height="17" viewBox="0 0 18 17"><circle cx="8.5" cy="8" r="7.5" fill="#6a5fd8"/><path d="M3.5 13 L1.5 16 L6 14.5 Z" fill="#6a5fd8"/><rect x="4.5" y="5.5" width="6" height="5" rx="1" fill="#fff"/><path d="M10.5 7 L13.5 5.5 V10.5 L10.5 9 Z" fill="#fff"/></svg>
<svg style="position:absolute;left:536px;top:701px;" width="18" height="17" viewBox="0 0 18 17"><rect x="6" y="1.5" width="11" height="13" rx="1" fill="#1a7fd6"/><rect x="8" y="4" width="9" height="7" fill="#40a8f0"/><rect x="0.5" y="4" width="9" height="9" rx="1" fill="#0f64b8"/><circle cx="5" cy="8.5" r="2.5" fill="none" stroke="#fff" stroke-width="1.2"/></svg>
<div style="position:absolute;left:543px;top:720.5px;width:4px;height:1.4px;background:#9a9a9a;border-radius:1px;"></div>
<svg style="position:absolute;left:565px;top:701px;" width="18" height="17" viewBox="0 0 18 17"><circle cx="12" cy="5" r="3" fill="#7b83eb"/><rect x="7" y="7" width="10" height="8" rx="2" fill="#5059c9"/><rect x="0.5" y="4.5" width="9" height="9" rx="1" fill="#4b53bc"/><text x="5" y="11.5" font-size="7" fill="#fff" text-anchor="middle" font-weight="bold" font-family="Liberation Sans, sans-serif">T</text></svg>
<div style="position:absolute;left:572px;top:720.5px;width:4px;height:1.4px;background:#9a9a9a;border-radius:1px;"></div>
<svg style="position:absolute;left:575px;top:697.5px;" width="10" height="10" viewBox="0 0 10 10"><circle cx="5" cy="5" r="4.6" fill="#2aa84a"/><path d="M2.6 5 L4.3 6.7 L7.5 3.4" fill="none" stroke="#fff" stroke-width="1.1"/></svg>
<svg style="position:absolute;left:595px;top:701px;" width="18" height="17" viewBox="0 0 18 17"><circle cx="8.5" cy="8.5" r="8" fill="#db4437"/><path d="M8.5 8.5 L1.6 12.5 A8 8 0 0 0 12.5 15.4 Z" fill="#0f9d58"/><path d="M8.5 8.5 L12.5 15.4 A8 8 0 0 0 15.4 4.5 Z" fill="#ffcd40"/><circle cx="8.5" cy="8.5" r="3.8" fill="#fff"/><circle cx="8.5" cy="8.5" r="3" fill="#4285f4"/></svg>
<div style="position:absolute;left:602px;top:720.5px;width:4px;height:1.4px;background:#9a9a9a;border-radius:1px;"></div>
<svg style="position:absolute;left:625px;top:701px;" width="18" height="17" viewBox="0 0 18 17"><rect x="5" y="1" width="12" height="15" rx="1" fill="#ca64ea"/><rect x="0.5" y="3.5" width="10" height="10" rx="1" fill="#7719aa"/><text x="5.5" y="11.5" font-size="7.5" fill="#fff" text-anchor="middle" font-weight="bold" font-family="Liberation Sans, sans-serif">N</text></svg>
<div style="position:absolute;left:632px;top:720.5px;width:4px;height:1.4px;background:#9a9a9a;border-radius:1px;"></div>
<svg style="position:absolute;left:654px;top:701px;" width="18" height="17" viewBox="0 0 18 17"><rect x="5" y="1" width="12" height="15" rx="1" fill="#41a5ee"/><rect x="5" y="6" width="12" height="5" fill="#2b7cd3"/><rect x="0.5" y="3.5" width="10" height="10" rx="1" fill="#185abd"/><text x="5.5" y="11.5" font-size="7" fill="#fff" text-anchor="middle" font-weight="bold" font-family="Liberation Sans, sans-serif">W</text></svg>
<div style="position:absolute;left:661px;top:720.5px;width:4px;height:1.4px;background:#9a9a9a;border-radius:1px;"></div>
<svg style="position:absolute;left:684px;top:701px;" width="18" height="17" viewBox="0 0 18 17"><rect x="5" y="1" width="12" height="15" rx="1" fill="#33c481"/><rect x="5" y="6" width="12" height="5" fill="#21a366"/><rect x="0.5" y="3.5" width="10" height="10" rx="1" fill="#107c41"/><text x="5.5" y="11.5" font-size="7" fill="#fff" text-anchor="middle" font-weight="bold" font-family="Liberation Sans, sans-serif">X</text></svg>
<div style="position:absolute;left:691px;top:720.5px;width:4px;height:1.4px;background:#9a9a9a;border-radius:1px;"></div>
<svg style="position:absolute;left:714px;top:701px;" width="18" height="17" viewBox="0 0 18 17"><circle cx="8.5" cy="8.5" r="8" fill="#fff"/><rect x="7" y="3" width="2" height="5" rx="1" fill="#36c5f0"/><rect x="9.5" y="7" width="5" height="2" rx="1" fill="#2eb67d"/><rect x="8" y="9.5" width="2" height="5" rx="1" fill="#ecb22e"/><rect x="3" y="8" width="5" height="2" rx="1" fill="#e01e5a"/></svg>
<div style="position:absolute;left:721px;top:720.5px;width:4px;height:1.4px;background:#9a9a9a;border-radius:1px;"></div>
<svg style="position:absolute;left:744px;top:701px;" width="18" height="17" viewBox="0 0 18 17"><circle cx="8.5" cy="8.5" r="8" fill="#3a7fd0"/><circle cx="8.5" cy="8.5" r="4" fill="#f0b040"/><path d="M8.5 0.5 V16.5 M0.5 8.5 H16.5" stroke="#9cc8f0" stroke-width="0.6"/></svg>
<div style="position:absolute;left:751px;top:720.5px;width:4px;height:1.4px;background:#9a9a9a;border-radius:1px;"></div>
<svg style="position:absolute;left:773px;top:701px;" width="18" height="17" viewBox="0 0 18 17"><path d="M4 1.5 H17 L13 15.5 H0.5 Z" fill="#2f6fd0"/><path d="M5 5 L9 8 L4.5 11 M8 11.5 H11" fill="none" stroke="#fff" stroke-width="1.2"/></svg>
<svg style="position:absolute;left:802px;top:701px;" width="18" height="17" viewBox="0 0 18 17"><rect x="0.5" y="1.5" width="17" height="14" rx="1.5" fill="#3a3a3a" stroke="#666" stroke-width="0.6"/><path d="M3.5 6 L6.5 8.5 L3.5 11" fill="none" stroke="#fff" stroke-width="1.2"/><path d="M8 11.5 H13" stroke="#fff" stroke-width="1.2"/></svg>
<div style="position:absolute;left:809px;top:720.5px;width:4px;height:1.4px;background:#9a9a9a;border-radius:1px;"></div>
<svg style="position:absolute;left:832px;top:701px;" width="18" height="17" viewBox="0 0 18 17"><rect x="0.5" y="0.5" width="16" height="16" rx="2" fill="#21d789"/><rect x="0.5" y="0.5" width="16" height="8" rx="2" fill="#fcf84a"/><rect x="3" y="3" width="11" height="11" fill="#000"/><text x="8.5" y="9" font-size="5.5" fill="#fff" text-anchor="middle" font-weight="bold" font-family="Liberation Sans, sans-serif">PC</text><path d="M4.5 12 H8" stroke="#fff" stroke-width="0.8"/></svg>
<svg style="position:absolute;left:862px;top:701px;" width="18" height="17" viewBox="0 0 18 17"><rect x="0.5" y="0.5" width="16" height="16" rx="2" fill="#9775f8"/><rect x="0.5" y="8" width="16" height="8.5" rx="2" fill="#22d88f"/><rect x="3" y="3" width="11" height="11" fill="#000"/><text x="8.5" y="9" font-size="5.5" fill="#fff" text-anchor="middle" font-weight="bold" font-family="Liberation Sans, sans-serif">DG</text><path d="M4.5 12 H8" stroke="#fff" stroke-width="0.8"/></svg>
<svg style="position:absolute;left:890.5px;top:700.5px;" width="18" height="18" viewBox="0 0 18 18"><circle cx="9" cy="9" r="8.2" fill="#e8e0d8" stroke="#e07a2a" stroke-width="1.8"/><path d="M4 15 Q4.5 7 8.5 5.5 Q12.5 5 13 9 L12 15.5 Z" fill="#2f2f2f"/><circle cx="8" cy="8.5" r="1.4" fill="#fff"/></svg>
<svg style="position:absolute;left:921px;top:701px;" width="18" height="17" viewBox="0 0 18 17"><rect x="0.5" y="0.5" width="16" height="16" rx="1" fill="#1e9de0"/><g fill="#fff"><circle cx="4.5" cy="4.5" r="1"/><circle cx="8.5" cy="4.5" r="1"/><circle cx="12.5" cy="4.5" r="1"/><circle cx="4.5" cy="8.5" r="1"/><circle cx="8.5" cy="8.5" r="1"/><circle cx="12.5" cy="8.5" r="1"/><circle cx="4.5" cy="12.5" r="1"/><circle cx="8.5" cy="12.5" r="1"/><circle cx="12.5" cy="12.5" r="1"/></g></svg>
<svg style="position:absolute;left:950px;top:701px;" width="18" height="17" viewBox="0 0 18 17"><rect x="1.5" y="0.5" width="13" height="16" rx="1" fill="#5a6a7a"/><rect x="3" y="2" width="10" height="3" fill="#9fc8ee"/><g fill="#dfe6ee"><rect x="3" y="6.5" width="2.5" height="2"/><rect x="6.8" y="6.5" width="2.5" height="2"/><rect x="3" y="10" width="2.5" height="2"/><rect x="6.8" y="10" width="2.5" height="2"/><rect x="3" y="13.3" width="2.5" height="2"/><rect x="6.8" y="13.3" width="2.5" height="2"/></g><rect x="10.5" y="6.5" width="2.5" height="9" fill="#2a8ad8"/></svg>
<div style="position:absolute;left:976px;top:695.7px;width:26.5px;height:27px;background:#2e2e2e;border-radius:4px;"></div>
<svg style="position:absolute;left:980.5px;top:700.5px;" width="18" height="18" viewBox="0 0 18 18"><circle cx="9" cy="9" r="8.2" fill="#e8e0d8" stroke="#e07a2a" stroke-width="1.8"/><path d="M4 15 Q4.5 7 8.5 5.5 Q12.5 5 13 9 L12 15.5 Z" fill="#2f2f2f"/><circle cx="8" cy="8.5" r="1.4" fill="#fff"/></svg>
<div style="position:absolute;left:984.5px;top:721.8px;width:10px;height:2px;background:#4cc2ff;border-radius:1px;"></div>
<svg style="position:absolute;left:1135.5px;top:706.5px;" width="8" height="5" viewBox="0 0 8 5"><path d="M0.7 4.3 L4 1 L7.3 4.3" fill="none" stroke="#eee" stroke-width="1.1"/></svg>
<svg style="position:absolute;left:1154.5px;top:705px;" width="13" height="8" viewBox="0 0 13 8"><path d="M2.5 7.5 Q0.3 7.5 0.5 5.5 Q0.8 3.8 2.8 4 Q3.8 0.8 7 1 Q10 1.2 10.3 4 Q12.5 4.2 12.5 6 Q12.5 7.5 10.5 7.5 Z" fill="#2b8ef0"/></svg>
<svg style="position:absolute;left:1176.5px;top:703px;" width="11" height="12" viewBox="0 0 11 12"><rect x="0.6" y="1.5" width="8" height="7" fill="none" stroke="#eee" stroke-width="1"/><path d="M2.5 11 H7 M4.6 8.5 V11" stroke="#eee" stroke-width="1"/><rect x="6.5" y="0.5" width="4" height="4" fill="#1c1c1c" stroke="#eee" stroke-width="0.8"/></svg>
<svg style="position:absolute;left:1192.5px;top:704px;" width="11" height="11" viewBox="0 0 11 11"><path d="M0.8 4 H3 L6 1.2 V9.8 L3 7 H0.8 Z" fill="none" stroke="#eee" stroke-width="0.9"/><path d="M8 3.5 Q9.3 5.5 8 7.5 M9.5 2 Q11.5 5.5 9.5 9" fill="none" stroke="#aaa" stroke-width="0.8"/></svg>
<svg style="position:absolute;left:1207.5px;top:704px;" width="13" height="11" viewBox="0 0 13 11"><rect x="0.6" y="2" width="10" height="7" rx="1" fill="none" stroke="#eee" stroke-width="1"/><rect x="10.8" y="4" width="1.6" height="3" fill="#eee"/><path d="M4.5 1 L2.5 6 H5.5 L3.5 10" stroke="#eee" stroke-width="1" fill="none"/></svg>
<div class="t" style="left:1233px;top:699.00px;line-height:10px;font-size:7.8px;color:#f0f0f0;letter-spacing:0px;">4:04 PM</div>
<div class="t" style="left:1231px;top:710.00px;line-height:10px;font-size:7.8px;color:#f0f0f0;letter-spacing:0px;">1/3/2025</div>
<svg style="position:absolute;left:1270.5px;top:704px;" width="8" height="10" viewBox="0 0 8 10"><path d="M4 0.8 Q7 0.8 7 4 V7 L7.8 8 H0.2 L1 7 V4 Q1 0.8 4 0.8 Z" fill="#9fd8f8"/><circle cx="4" cy="9" r="1" fill="#9fd8f8"/></svg>
</body></html>
